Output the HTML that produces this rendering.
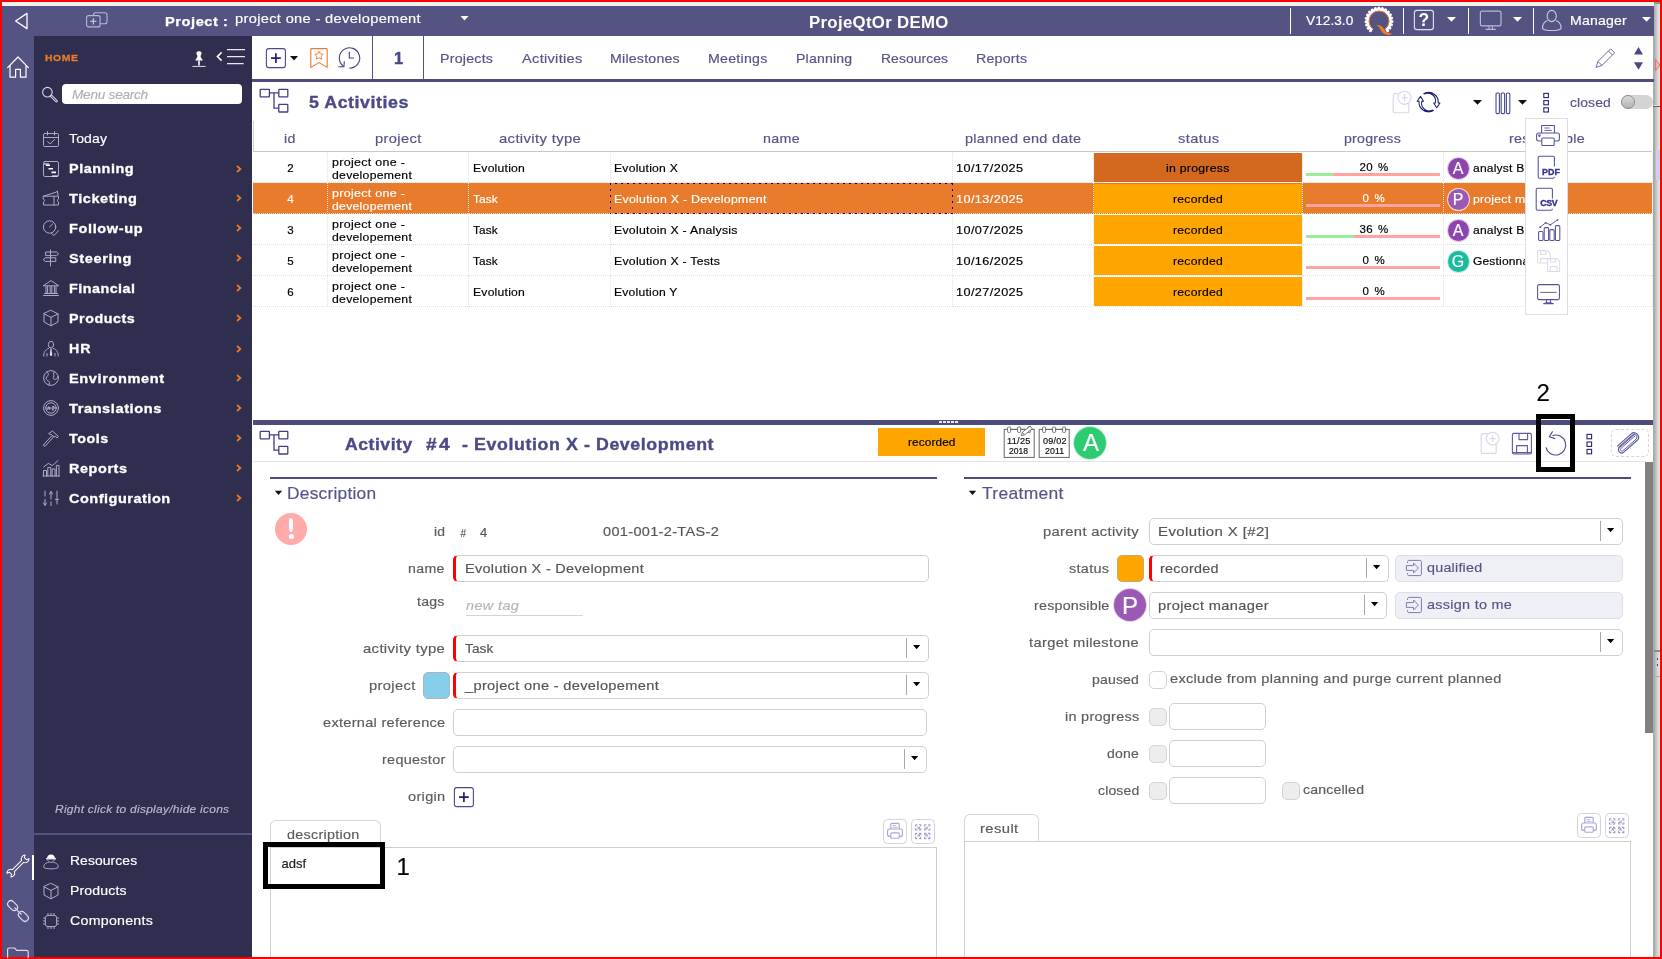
<!DOCTYPE html>
<html><head><meta charset="utf-8"><title>ProjeQtOr DEMO</title>
<style>
html,body{margin:0;padding:0;background:#fff;}
body{width:1662px;height:959px;overflow:hidden;position:relative;font-family:"Liberation Sans",sans-serif;}
#app{position:absolute;left:0;top:0;width:1662px;height:959px;overflow:hidden;background:#ff0000;will-change:transform;}
#app div,#app svg{position:absolute;}
#app svg{overflow:visible;}
</style></head><body><div id="app">
<div style="left:2px;top:2px;width:1658px;height:4px;background:#f1f1f1;"></div>
<div style="left:2px;top:6px;width:1652px;height:30px;background:#545381;"></div>
<div style="left:2px;top:36px;width:32px;height:920.6px;background:#545381;"></div>
<div style="left:34px;top:36px;width:218px;height:920.6px;background:#2f2e4f;"></div>
<div style="left:252px;top:36px;width:1402px;height:920.6px;background:#fff;"></div>
<div style="left:1654px;top:2px;width:6px;height:954.6px;background:linear-gradient(90deg,#a6a6a6 0,#c2c2c2 30%,#d6d6d6 65%,#e8f0f0 100%);"></div>
<div style="left:1653px;top:36px;width:1px;height:920.6px;background:#a9a9a9;"></div>
<div style="left:1654px;top:2px;width:6px;height:2px;background:#8f9494;"></div>
<div style="left:1654px;top:104.6px;width:6px;height:1px;background:#e4e4e4;"></div>
<div style="left:1653.4px;top:105.6px;width:6.6px;height:1.6px;background:#5e5e5e;"></div>
<div style="left:1655.5px;top:150px;width:4.5px;height:30px;background:#d0d0ee;"></div>
<div style="left:1654px;top:650px;width:6px;height:1.6px;background:#8a8a8a;"></div>
<div style="left:1654px;top:676px;width:6px;height:1.4px;background:#ababab;"></div>
<div style="left:1657px;top:658px;width:1.2px;height:2px;background:#446;"></div>
<div style="left:1657px;top:664px;width:1.2px;height:2px;background:#446;"></div>
<svg style="left:1655px;top:58px;" width="6" height="14" viewBox="0 0 6 14" fill="none"><path d="M0.6 1.4 L5 7 L0.6 12.6 Z" fill="#f4b4b4" stroke="#e36a6a" stroke-width=".9"/></svg>
<svg style="left:13px;top:11px;" width="17" height="20" viewBox="0 0 17 20" fill="none"><path d="M14 2.4 L2.6 10 L14 17.6 Z" stroke="#fff" stroke-width="1.3" stroke-linejoin="round"/></svg>
<svg style="left:85px;top:11px;" width="24" height="18" viewBox="0 0 24 18" fill="none"><rect x="8.5" y="1.7" width="13.5" height="11" rx="2" stroke="#b9b8d3" stroke-width="1.1"/><rect x="1.6" y="4.6" width="13.5" height="11.3" rx="2" stroke="#b9b8d3" stroke-width="1.1" fill="#545381"/><path d="M8.3 7.2v6.2M5.2 10.3h6.2" stroke="#d6d6e8" stroke-width="1.1"/></svg>
<div style="left:164.70px;top:14px;font-size:13px;line-height:15px;height:15px;color:#ffffff;white-space:nowrap;letter-spacing:0.484px;transform:scaleX(1.1256);transform-origin:0 0;font-weight:bold;-webkit-text-stroke:.25px #fff;">Project :</div>
<div style="left:235.40px;top:11px;font-size:13.6px;line-height:15px;height:15px;color:#ffffff;white-space:nowrap;letter-spacing:0.311px;transform:scaleX(1.0761);transform-origin:0 0;-webkit-text-stroke:.18px currentColor;">project one - developement</div>
<svg style="left:459px;top:15px;" width="11" height="7" viewBox="0 0 11 7" fill="none"><path d="M1.5 1 L9.5 1 L5.5 5.6 Z" fill="#fff"/></svg>
<div style="left:808.80px;top:14px;font-size:16px;line-height:17px;height:17px;color:#ffffff;white-space:nowrap;letter-spacing:0.308px;transform:scaleX(1.0488);transform-origin:0 0;font-weight:bold;">ProjeQtOr DEMO</div>
<div style="left:1290px;top:8px;width:1.3px;height:26px;background:#fff;"></div>
<div style="left:1403px;top:8px;width:1.3px;height:26px;background:#fff;"></div>
<div style="left:1468px;top:8px;width:1.3px;height:26px;background:#fff;"></div>
<div style="left:1533px;top:8px;width:1.3px;height:26px;background:#fff;"></div>
<div style="left:1305.70px;top:13px;font-size:13.6px;line-height:15px;height:15px;color:#ffffff;white-space:nowrap;letter-spacing:0.028px;transform:scaleX(1.0054);transform-origin:0 0;-webkit-text-stroke:.18px currentColor;">V12.3.0</div>
<svg style="left:1364px;top:6px;" width="30" height="30" viewBox="0 0 30 30" fill="none"><circle cx="6.47" cy="24.81" r="1.5" fill="#fff"/><circle cx="4.17" cy="22.20" r="1.5" fill="#fff"/><circle cx="2.65" cy="19.07" r="1.5" fill="#fff"/><circle cx="2.02" cy="15.64" r="1.5" fill="#fff"/><circle cx="2.31" cy="12.17" r="1.5" fill="#fff"/><circle cx="3.52" cy="8.91" r="1.5" fill="#fff"/><circle cx="5.54" cy="6.08" r="1.5" fill="#fff"/><circle cx="8.25" cy="3.89" r="1.5" fill="#fff"/><circle cx="11.44" cy="2.50" r="1.5" fill="#fff"/><circle cx="14.89" cy="2.00" r="1.5" fill="#fff"/><circle cx="18.34" cy="2.44" r="1.5" fill="#fff"/><circle cx="21.55" cy="3.77" r="1.5" fill="#fff"/><circle cx="24.30" cy="5.92" r="1.5" fill="#fff"/><circle cx="26.38" cy="8.71" r="1.5" fill="#fff"/><circle cx="27.64" cy="11.95" r="1.5" fill="#fff"/><circle cx="27.99" cy="15.42" r="1.5" fill="#fff"/><circle cx="27.42" cy="18.85" r="1.5" fill="#fff"/><circle cx="25.95" cy="22.01" r="1.5" fill="#fff"/><circle cx="23.70" cy="24.66" r="1.5" fill="#fff"/><path d="M8.24 24.30 A11.5 11.5 0 1 1 21.92 24.18" stroke="#fff" stroke-width="2.6" /><path d="M9.18 23.01 A9.9 9.9 0 1 1 20.96 22.91" stroke="#e97b2c" stroke-width="1" /><path d="M12.4 19 C16.8 19 18.8 21 20.4 23.6 C22 26.2 24.4 27.6 28.6 27.4 C24.8 29.8 20.2 29.4 17.8 25.6 C16.2 23 15.4 20.8 12.4 19 Z" fill="#ee7f22"/></svg>
<svg style="left:1413px;top:9px;" width="22" height="22" viewBox="0 0 22 22" fill="none"><rect x="1.4" y="1.4" width="19" height="19.2" rx="2.4" stroke="#dedef0" stroke-width="1.15"/></svg>
<div style="left:1418.60px;top:10px;font-size:17.5px;line-height:20px;height:20px;color:#ffffff;white-space:nowrap;font-weight:bold;">?</div>
<svg style="left:1446px;top:16px;" width="11" height="7" viewBox="0 0 11 7" fill="none"><path d="M1 1 L10 1 L5.5 5.8 Z" fill="#fff"/></svg>
<svg style="left:1479px;top:10px;" width="24" height="21" viewBox="0 0 24 21" fill="none"><rect x="1.4" y="1.2" width="20.6" height="14.6" rx="1.6" stroke="#b9b8d3" stroke-width="1.2"/><path d="M10 16v3M13.4 16v3M6.6 19.4h10.2" stroke="#b9b8d3" stroke-width="1.1"/></svg>
<svg style="left:1512px;top:16px;" width="11" height="7" viewBox="0 0 11 7" fill="none"><path d="M1 1 L10 1 L5.5 5.8 Z" fill="#fff"/></svg>
<svg style="left:1541px;top:9px;" width="22" height="23" viewBox="0 0 22 23" fill="none"><ellipse cx="10.7" cy="7" rx="4.6" ry="5.6" stroke="#c9c8de" stroke-width="1.1"/><path d="M6.6 11.6 C2.6 13 1.4 16 1.6 19.6 C4 22.2 17.6 22.2 20 19.6 C20.2 16 19 13 14.8 11.6" stroke="#c9c8de" stroke-width="1.1"/></svg>
<div style="left:1570.30px;top:13px;font-size:13.6px;line-height:15px;height:15px;color:#ffffff;white-space:nowrap;letter-spacing:0.195px;transform:scaleX(1.0339);transform-origin:0 0;-webkit-text-stroke:.18px currentColor;">Manager</div>
<svg style="left:1641px;top:16px;" width="11" height="7" viewBox="0 0 11 7" fill="none"><path d="M1 1 L10 1 L5.5 5.8 Z" fill="#fff"/></svg>
<svg style="left:6px;top:55px;" width="24" height="24" viewBox="0 0 24 24" fill="none"><path d="M1.6 12.6 L12 2 L22.4 12.6 M4 10.6 V22.2 H9.6 V14.4 H14.4 V22.2 H20 V10.6" stroke="#fff" stroke-width="1.2" stroke-linejoin="round" stroke-linecap="round"/></svg>
<svg style="left:6px;top:854px;" width="24" height="24" viewBox="0 0 24 24" fill="none"><path transform="translate(12 12) rotate(-45) scale(.93)" d="M7 -1.5 A4.2 4.2 0 0 1 13.9 -2.9 L11.2 -1.6 L11.2 1.6 L13.9 2.9 A4.2 4.2 0 0 1 7 1.5 L-7 1.5 A4.2 4.2 0 0 1 -13.9 2.9 L-11.2 1.6 L-11.2 -1.6 L-13.9 -2.9 A4.2 4.2 0 0 1 -7 -1.5 Z" stroke="#fff" stroke-width="1.05" stroke-linejoin="round"/></svg>
<div style="left:31.6px;top:855px;width:2.4px;height:25px;background:#fff;"></div>
<svg style="left:6px;top:899px;" width="24" height="24" viewBox="0 0 24 24" fill="none"><g stroke="#dcdcec" stroke-width="1.2"><rect x="-3.3" y="-5.6" width="6.6" height="11.2" rx="3.3" transform="translate(6.6 6.6) rotate(-45)"/><rect x="-3.3" y="-5.6" width="6.6" height="11.2" rx="3.3" transform="translate(17.4 17.4) rotate(-45)"/><path d="M8.4 8.4 L15.6 15.6"/></g></svg>
<svg style="left:6px;top:946px;" width="24" height="12" viewBox="0 0 24 12" fill="none"><path d="M1.6 12 V3.4 C1.6 2.4 2.2 2 3 2 H8.6 L10.8 4.4 H20.6 C21.6 4.4 22.2 5 22.2 6 V12" stroke="#dcdcec" stroke-width="1.2"/></svg>
<div style="left:44.60px;top:52px;font-size:9.5px;line-height:11px;height:11px;color:#e97b2c;white-space:nowrap;letter-spacing:0.537px;transform:scaleX(1.0926);transform-origin:0 0;font-weight:bold;-webkit-text-stroke:.3px #e97b2c;">HOME</div>
<svg style="left:191px;top:50px;" width="16" height="18" viewBox="0 0 16 18" fill="none"><path d="M5.4 3.2 C5.4 0.6 10.6 0.6 10.6 3.2 C10.6 4.6 9.6 5 9.6 6.4 C9.6 8 11.6 8.4 11.6 10.6 H4.4 C4.4 8.4 6.4 8 6.4 6.4 C6.4 5 5.4 4.6 5.4 3.2 Z" fill="#fff"/><path d="M8 10.6 V15.6" stroke="#fff" stroke-width="1.6"/><path d="M1.4 16.4 H14.6" stroke="#dcdcec" stroke-width="1"/></svg>
<svg style="left:215px;top:47px;" width="32" height="20" viewBox="0 0 32 20" fill="none"><path d="M6.6 5.4 L2.4 9.6 L6.6 13.6" stroke="#fff" stroke-width="1.5"/><path d="M12 2.6 H30 M12 9.6 H30 M12 16.6 H28.6" stroke="#e8e8f2" stroke-width="1.2"/></svg>
<svg style="left:41px;top:86px;" width="18" height="18" viewBox="0 0 18 18" fill="none"><circle cx="6.4" cy="6.2" r="4.8" stroke="#d8d8e6" stroke-width="1.1"/><path d="M10 9.8 L15.6 15.2" stroke="#d8d8e6" stroke-width="2.6" stroke-linecap="round"/><path d="M10.4 10.2 L15.4 15" stroke="#2f2e4f" stroke-width="1" stroke-linecap="round"/></svg>
<div style="left:62px;top:84px;width:180px;height:20px;background:#fff;border-radius:4px;"></div>
<div style="left:72.00px;top:87px;font-size:13.6px;line-height:15px;height:15px;color:#b0b0b0;white-space:nowrap;letter-spacing:-0.241px;font-style:italic;-webkit-text-stroke:.18px currentColor;">Menu search</div>
<div style="left:69.40px;top:131px;font-size:13.6px;line-height:15px;height:15px;color:#ffffff;white-space:nowrap;letter-spacing:0.157px;transform:scaleX(1.0266);transform-origin:0 0;-webkit-text-stroke:.18px currentColor;">Today</div>
<svg style="left:42px;top:130.3px;" width="18" height="18" viewBox="0 0 18 18" fill="none"><rect x="1.5" y="3.5" width="15" height="13" rx="1" stroke="#adacc6" stroke-width="1" stroke-linejoin="round" stroke-linecap="round"/><path d="M1.5 7.5 H16.5 M5.5 1.5 V5 M12.5 1.5 V5 M5.6 11.6 L8.2 14 L12.6 9.4" stroke="#adacc6" stroke-width="1" stroke-linejoin="round" stroke-linecap="round"/></svg>
<div style="left:69.40px;top:161px;font-size:13px;line-height:15px;height:15px;color:#ffffff;white-space:nowrap;letter-spacing:0.502px;transform:scaleX(1.1062);transform-origin:0 0;font-weight:bold;-webkit-text-stroke:.3px #fff;">Planning</div>
<svg style="left:42px;top:159.6px;" width="18" height="18" viewBox="0 0 18 18" fill="none"><rect x="1.5" y="1.5" width="15" height="15" rx="1.6" stroke="#adacc6" stroke-width="1" stroke-linejoin="round" stroke-linecap="round"/><path d="M4 5.2 H8 M6.5 8.8 H11 M9.5 12.4 H14" stroke="#fff" stroke-width="1.6"/><path d="M2 4 H7 M10 16 H16" stroke="#fff" stroke-width="1.2"/></svg>
<svg style="left:235px;top:163.6px;" width="8" height="10" viewBox="0 0 8 10" fill="none"><path d="M2 2 L5.4 5 L2 8" stroke="#e97b2c" stroke-width="1.7"/></svg>
<div style="left:69.40px;top:191px;font-size:13px;line-height:15px;height:15px;color:#ffffff;white-space:nowrap;letter-spacing:0.496px;transform:scaleX(1.1169);transform-origin:0 0;font-weight:bold;-webkit-text-stroke:.3px #fff;">Ticketing</div>
<svg style="left:42px;top:189.4px;" width="18" height="18" viewBox="0 0 18 18" fill="none"><path d="M2 7 L14 3.2 L15.4 2 L16 6.4 M1.5 7.2 H16.5 V10 C15 10.4 15 12.6 16.5 13 V16 H1.5 V13 C3 12.6 3 10.4 1.5 10 Z M12 7.4 V16" stroke="#adacc6" stroke-width="1" stroke-linejoin="round" stroke-linecap="round"/></svg>
<svg style="left:235px;top:193.4px;" width="8" height="10" viewBox="0 0 8 10" fill="none"><path d="M2 2 L5.4 5 L2 8" stroke="#e97b2c" stroke-width="1.7"/></svg>
<div style="left:69.40px;top:221px;font-size:13px;line-height:15px;height:15px;color:#ffffff;white-space:nowrap;letter-spacing:0.546px;transform:scaleX(1.1196);transform-origin:0 0;font-weight:bold;-webkit-text-stroke:.3px #fff;">Follow-up</div>
<svg style="left:42px;top:219.4px;" width="18" height="18" viewBox="0 0 18 18" fill="none"><circle cx="7.6" cy="8" r="6.2" stroke="#adacc6" stroke-width="1" stroke-linejoin="round" stroke-linecap="round"/><path d="M7.6 8 L10.6 5 M9.6 14.4 L12 16.6 L16.6 11.6" stroke="#adacc6" stroke-width="1" stroke-linejoin="round" stroke-linecap="round"/></svg>
<svg style="left:235px;top:223.4px;" width="8" height="10" viewBox="0 0 8 10" fill="none"><path d="M2 2 L5.4 5 L2 8" stroke="#e97b2c" stroke-width="1.7"/></svg>
<div style="left:69.40px;top:251px;font-size:13px;line-height:15px;height:15px;color:#ffffff;white-space:nowrap;letter-spacing:0.535px;transform:scaleX(1.1210);transform-origin:0 0;font-weight:bold;-webkit-text-stroke:.3px #fff;">Steering</div>
<svg style="left:42px;top:249.4px;" width="18" height="18" viewBox="0 0 18 18" fill="none"><path d="M8.5 1 V17 M4 3 H14.6 L16.6 4.8 L14.6 6.6 H4 Z M13.4 8.8 H3.2 L1.2 10.6 L3.2 12.4 H13.4 Z" stroke="#adacc6" stroke-width="1" stroke-linejoin="round" stroke-linecap="round"/></svg>
<svg style="left:235px;top:253.4px;" width="8" height="10" viewBox="0 0 8 10" fill="none"><path d="M2 2 L5.4 5 L2 8" stroke="#e97b2c" stroke-width="1.7"/></svg>
<div style="left:69.40px;top:281px;font-size:13px;line-height:15px;height:15px;color:#ffffff;white-space:nowrap;letter-spacing:0.438px;transform:scaleX(1.1028);transform-origin:0 0;font-weight:bold;-webkit-text-stroke:.3px #fff;">Financial</div>
<svg style="left:42px;top:279.2px;" width="18" height="18" viewBox="0 0 18 18" fill="none"><path d="M1.5 6.6 L9 1.6 L16.5 6.6 Z M1.5 16.5 H16.5 M2.5 14.5 H15.5 M4 7.6 V14 M5.6 7.6 V14 M8.2 7.6 V14 M9.8 7.6 V14 M12.4 7.6 V14 M14 7.6 V14" stroke="#adacc6" stroke-width="1" stroke-linejoin="round" stroke-linecap="round"/></svg>
<svg style="left:235px;top:283.2px;" width="8" height="10" viewBox="0 0 8 10" fill="none"><path d="M2 2 L5.4 5 L2 8" stroke="#e97b2c" stroke-width="1.7"/></svg>
<div style="left:69.40px;top:311px;font-size:13px;line-height:15px;height:15px;color:#ffffff;white-space:nowrap;letter-spacing:0.482px;transform:scaleX(1.0986);transform-origin:0 0;font-weight:bold;-webkit-text-stroke:.3px #fff;">Products</div>
<svg style="left:42px;top:309.2px;" width="18" height="18" viewBox="0 0 18 18" fill="none"><path d="M9 1.4 L16 4.8 V13 L9 16.8 L2 13 V4.8 Z M2 4.8 L9 8.4 L16 4.8 M9 8.4 V16.8" stroke="#adacc6" stroke-width="1" stroke-linejoin="round" stroke-linecap="round"/></svg>
<svg style="left:235px;top:313.2px;" width="8" height="10" viewBox="0 0 8 10" fill="none"><path d="M2 2 L5.4 5 L2 8" stroke="#e97b2c" stroke-width="1.7"/></svg>
<div style="left:69.40px;top:341px;font-size:13px;line-height:15px;height:15px;color:#ffffff;white-space:nowrap;letter-spacing:1.036px;transform:scaleX(1.0902);transform-origin:0 0;font-weight:bold;-webkit-text-stroke:.3px #fff;">HR</div>
<svg style="left:42px;top:339.6px;" width="18" height="18" viewBox="0 0 18 18" fill="none"><ellipse cx="9" cy="4.6" rx="2.6" ry="3.4" stroke="#adacc6" stroke-width="1" stroke-linejoin="round" stroke-linecap="round"/><path d="M6.6 8.4 C3 9.6 1.6 12.6 1.8 16 M11.4 8.4 C15 9.6 16.4 12.6 16.2 16 M5 13.4 V16 M13 13.4 V16" stroke="#adacc6" stroke-width="1" stroke-linejoin="round" stroke-linecap="round"/><path d="M9 8.6 L8.2 14.6 L9 16 L9.8 14.6 Z" fill="#fff" stroke="#fff" stroke-width=".5"/></svg>
<svg style="left:235px;top:343.6px;" width="8" height="10" viewBox="0 0 8 10" fill="none"><path d="M2 2 L5.4 5 L2 8" stroke="#e97b2c" stroke-width="1.7"/></svg>
<div style="left:69.40px;top:371px;font-size:13px;line-height:15px;height:15px;color:#ffffff;white-space:nowrap;letter-spacing:0.557px;transform:scaleX(1.1174);transform-origin:0 0;font-weight:bold;-webkit-text-stroke:.3px #fff;">Environment</div>
<svg style="left:42px;top:369.3px;" width="18" height="18" viewBox="0 0 18 18" fill="none"><circle cx="9" cy="9" r="7.4" stroke="#adacc6" stroke-width="1" stroke-linejoin="round" stroke-linecap="round"/><path d="M5 3 C7.6 4.4 6 6.6 4.6 8 C3.4 9.4 4.6 11.6 6.4 12 C8 12.6 7.4 14.6 7 16 M12.4 2.6 C10.4 4.6 12.6 6 11.6 8.4 C10.6 10.6 13 11 14.6 9.6 C15.6 8.8 16 8 16.2 7.4" stroke="#adacc6" stroke-width="1" stroke-linejoin="round" stroke-linecap="round"/></svg>
<svg style="left:235px;top:373.3px;" width="8" height="10" viewBox="0 0 8 10" fill="none"><path d="M2 2 L5.4 5 L2 8" stroke="#e97b2c" stroke-width="1.7"/></svg>
<div style="left:69.40px;top:401px;font-size:13px;line-height:15px;height:15px;color:#ffffff;white-space:nowrap;letter-spacing:0.509px;transform:scaleX(1.1232);transform-origin:0 0;font-weight:bold;-webkit-text-stroke:.3px #fff;">Translations</div>
<svg style="left:42px;top:399.4px;" width="18" height="18" viewBox="0 0 18 18" fill="none"><circle cx="9" cy="9" r="7.4" stroke="#adacc6" stroke-width="1" stroke-linejoin="round" stroke-linecap="round"/><circle cx="9" cy="9" r="5.2" stroke="#adacc6" stroke-width="1" stroke-linejoin="round" stroke-linecap="round"/><path d="M3.8 9 H14.2" stroke="#adacc6" stroke-width="1" stroke-linejoin="round" stroke-linecap="round"/><path d="M5.6 11 L6.8 7.6 L8 11 M10 7.6 H12.2 L10 11 H12.2" stroke="#c4c3d8" stroke-width=".8"/></svg>
<svg style="left:235px;top:403.4px;" width="8" height="10" viewBox="0 0 8 10" fill="none"><path d="M2 2 L5.4 5 L2 8" stroke="#e97b2c" stroke-width="1.7"/></svg>
<div style="left:69.40px;top:431px;font-size:13px;line-height:15px;height:15px;color:#ffffff;white-space:nowrap;letter-spacing:0.493px;transform:scaleX(1.0962);transform-origin:0 0;font-weight:bold;-webkit-text-stroke:.3px #fff;">Tools</div>
<svg style="left:42px;top:429.3px;" width="18" height="18" viewBox="0 0 18 18" fill="none"><path d="M1.6 16.4 L3 17.4 L11.8 7.6 L10.4 6.6 Z M7 4.4 L10.4 2 L16.4 7.4 L15 9 L13.4 7.2 L12 8 L9.6 5.8 Z" stroke="#adacc6" stroke-width="1" stroke-linejoin="round" stroke-linecap="round"/></svg>
<svg style="left:235px;top:433.3px;" width="8" height="10" viewBox="0 0 8 10" fill="none"><path d="M2 2 L5.4 5 L2 8" stroke="#e97b2c" stroke-width="1.7"/></svg>
<div style="left:69.40px;top:461px;font-size:13px;line-height:15px;height:15px;color:#ffffff;white-space:nowrap;letter-spacing:0.534px;transform:scaleX(1.1085);transform-origin:0 0;font-weight:bold;-webkit-text-stroke:.3px #fff;">Reports</div>
<svg style="left:42px;top:459.4px;" width="18" height="18" viewBox="0 0 18 18" fill="none"><path d="M1.5 17 V11.5 H4.5 V17 M5.8 17 V8.5 H8.8 V17 M10.1 17 V10 H13.1 V17 M14.4 17 V6.5 H17 V17 M1 17 H17.4 M1.6 8 L6.4 4.4 L10.4 6.6 L16 1.6" stroke="#adacc6" stroke-width="1" stroke-linejoin="round" stroke-linecap="round"/></svg>
<svg style="left:235px;top:463.4px;" width="8" height="10" viewBox="0 0 8 10" fill="none"><path d="M2 2 L5.4 5 L2 8" stroke="#e97b2c" stroke-width="1.7"/></svg>
<div style="left:69.40px;top:491px;font-size:13px;line-height:15px;height:15px;color:#ffffff;white-space:nowrap;letter-spacing:0.477px;transform:scaleX(1.1120);transform-origin:0 0;font-weight:bold;-webkit-text-stroke:.3px #fff;">Configuration</div>
<svg style="left:42px;top:489.4px;" width="18" height="18" viewBox="0 0 18 18" fill="none"><path d="M3 2 V15 M9 4 V16.6 M15 2 V15 M1.6 14 L3 16.6 L4.4 14 M7.6 5 L9 2.2 L10.4 5 M13.4 10.4 H16.6" stroke="#adacc6" stroke-width="1" stroke-linejoin="round" stroke-linecap="round"/><path d="M1.8 8.8 H4.2 M7.8 11.4 H10.2" stroke="#2f2e4f" stroke-width="2.4"/></svg>
<svg style="left:235px;top:493.4px;" width="8" height="10" viewBox="0 0 8 10" fill="none"><path d="M2 2 L5.4 5 L2 8" stroke="#e97b2c" stroke-width="1.7"/></svg>
<div style="left:55.00px;top:803px;font-size:11px;line-height:12px;height:12px;color:#b9b8cc;white-space:nowrap;letter-spacing:0.251px;transform:scaleX(1.0858);transform-origin:0 0;font-style:italic;-webkit-text-stroke:.18px currentColor;">Right click to display/hide icons</div>
<div style="left:34px;top:833px;width:218px;height:2px;background:#545381;"></div>
<div style="left:69.60px;top:853px;font-size:13.6px;line-height:15px;height:15px;color:#ffffff;white-space:nowrap;letter-spacing:0.103px;transform:scaleX(1.0194);transform-origin:0 0;-webkit-text-stroke:.18px currentColor;">Resources</div>
<div style="left:69.60px;top:883px;font-size:13.6px;line-height:15px;height:15px;color:#ffffff;white-space:nowrap;letter-spacing:0.162px;transform:scaleX(1.0328);transform-origin:0 0;-webkit-text-stroke:.18px currentColor;">Products</div>
<div style="left:69.60px;top:913px;font-size:13.6px;line-height:15px;height:15px;color:#ffffff;white-space:nowrap;letter-spacing:0.242px;transform:scaleX(1.0443);transform-origin:0 0;-webkit-text-stroke:.18px currentColor;">Components</div>
<svg style="left:42px;top:852px;" width="18" height="18" viewBox="0 0 18 18" fill="none"><path d="M5 6.6 C5 1.2 13 1.2 13 6.6 Z" fill="#fff"/><path d="M4 6.8 H14" stroke="#fff" stroke-width="1.2"/><path d="M5.6 7.4 C5.6 11.4 12.4 11.4 12.4 7.4 M6.4 10.4 C2.8 11 1.6 13 1.8 15.4 C4 17.4 14 17.4 16.2 15.4 C16.4 13 15.2 11 11.6 10.4" stroke="#adacc6" stroke-width="1" stroke-linejoin="round" stroke-linecap="round"/></svg>
<svg style="left:42px;top:882px;" width="18" height="18" viewBox="0 0 18 18" fill="none"><path d="M9 1.4 L16 4.8 V13 L9 16.8 L2 13 V4.8 Z M2 4.8 L9 8.4 L16 4.8 M9 8.4 V16.8" stroke="#adacc6" stroke-width="1" stroke-linejoin="round" stroke-linecap="round"/></svg>
<svg style="left:42px;top:912px;" width="18" height="18" viewBox="0 0 18 18" fill="none"><rect x="3.4" y="3.4" width="11.2" height="11.2" rx="2.4" stroke="#adacc6" stroke-width="1" stroke-linejoin="round" stroke-linecap="round"/><path d="M6 1.4 V3 M9 1.4 V3 M12 1.4 V3 M6 15 V16.6 M9 15 V16.6 M12 15 V16.6 M1.4 6 H3 M1.4 9 H3 M1.4 12 H3 M15 6 H16.6 M15 9 H16.6 M15 12 H16.6" stroke="#adacc6" stroke-width="1" stroke-linejoin="round" stroke-linecap="round"/></svg>
<div style="left:252px;top:79px;width:1402px;height:3px;background:#4d4c7e;"></div>
<div style="left:372px;top:36px;width:1.2px;height:43px;background:#545381;"></div>
<div style="left:423px;top:36px;width:1.2px;height:43px;background:#545381;"></div>
<svg style="left:265px;top:47px;" width="22" height="22" viewBox="0 0 22 22" fill="none"><rect x="1.4" y="1.6" width="19" height="19" rx="2.4" stroke="#4a4990" stroke-width="1.1"/><path d="M10.9 6.2 V16 M6 11.1 H15.8" stroke="#1f1e72" stroke-width="1.7"/></svg>
<svg style="left:289px;top:55px;" width="10" height="7" viewBox="0 0 10 7" fill="none"><path d="M1 1 L9 1 L5 5.6 Z" fill="#111"/></svg>
<svg style="left:309px;top:47px;" width="20" height="22" viewBox="0 0 20 22" fill="none"><path d="M2.6 1.6 H17.4 C17.9 1.6 18.2 1.9 18.2 2.4 V20.4 L10 15.6 L1.8 20.4 V2.4 C1.8 1.9 2.1 1.6 2.6 1.6 Z" stroke="#e97b2c" stroke-width="1.1" stroke-linejoin="round"/><path d="M10 4.2 L11.3 6.9 L14.2 7.3 L12.1 9.3 L12.6 12.2 L10 10.8 L7.4 12.2 L7.9 9.3 L5.8 7.3 L8.7 6.9 Z" stroke="#e97b2c" stroke-width=".9" stroke-linejoin="round"/></svg>
<svg style="left:337px;top:46px;" width="25" height="24" viewBox="0 0 25 24" fill="none"><g stroke="#3f3e8c" stroke-width="1.1"><path d="M12.3 22.2 A10.2 10.2 0 1 0 6.3 20.1"/><path d="M7.3 15.3 L6.9 20.7 L1.5 20.7" stroke-linejoin="miter"/><path d="M12.3 5.7 V12 H16.9"/></g></svg>
<div style="left:393.91px;top:49px;font-size:16.5px;line-height:18px;height:18px;color:#4b4a86;white-space:nowrap;font-weight:bold;-webkit-text-stroke:.4px #4b4a86;">1</div>
<div style="left:440.00px;top:51px;font-size:13.6px;line-height:15px;height:15px;color:#565588;white-space:nowrap;letter-spacing:0.211px;transform:scaleX(1.0473);transform-origin:0 0;-webkit-text-stroke:.18px currentColor;">Projects</div>
<div style="left:521.60px;top:51px;font-size:13.6px;line-height:15px;height:15px;color:#565588;white-space:nowrap;letter-spacing:0.275px;transform:scaleX(1.0743);transform-origin:0 0;-webkit-text-stroke:.18px currentColor;">Activities</div>
<div style="left:609.90px;top:51px;font-size:13.6px;line-height:15px;height:15px;color:#565588;white-space:nowrap;letter-spacing:0.200px;transform:scaleX(1.0434);transform-origin:0 0;-webkit-text-stroke:.18px currentColor;">Milestones</div>
<div style="left:708.20px;top:51px;font-size:13.6px;line-height:15px;height:15px;color:#565588;white-space:nowrap;letter-spacing:0.225px;transform:scaleX(1.0448);transform-origin:0 0;-webkit-text-stroke:.18px currentColor;">Meetings</div>
<div style="left:796.20px;top:51px;font-size:13.6px;line-height:15px;height:15px;color:#565588;white-space:nowrap;letter-spacing:0.175px;transform:scaleX(1.0359);transform-origin:0 0;-webkit-text-stroke:.18px currentColor;">Planning</div>
<div style="left:881.20px;top:51px;font-size:13.6px;line-height:15px;height:15px;color:#565588;white-space:nowrap;letter-spacing:0.098px;transform:scaleX(1.0184);transform-origin:0 0;-webkit-text-stroke:.18px currentColor;">Resources</div>
<div style="left:976.30px;top:51px;font-size:13.6px;line-height:15px;height:15px;color:#565588;white-space:nowrap;letter-spacing:0.216px;transform:scaleX(1.0426);transform-origin:0 0;-webkit-text-stroke:.18px currentColor;">Reports</div>
<svg style="left:1593px;top:46px;" width="25" height="24" viewBox="0 0 25 24" fill="none"><path d="M3 21.4 L5 15.4 L17.6 2.8 L21.6 6.8 L9 19.4 Z M5 15.4 L9 19.4 M15.4 5 L19.4 9" stroke="#6e6da2" stroke-width="1" stroke-linejoin="round"/></svg>
<svg style="left:1633px;top:46px;" width="11" height="25" viewBox="0 0 11 25" fill="none"><path d="M1 8.6 L5.5 1 L10 8.6 Z M1 16.2 L5.5 23.8 L10 16.2 Z" fill="#4a4988"/></svg>
<svg style="left:259px;top:87.8px;" width="31" height="26" viewBox="0 0 31 26" fill="none"><g stroke="#3f3e8c" stroke-width="1.3"><rect x="1.2" y="1.3" width="9.2" height="7.6" rx=".6"/><rect x="19.8" y="1.3" width="9" height="7.6" rx=".6"/><rect x="19.8" y="16.4" width="9" height="7.6" rx=".6"/><path d="M10.4 4.9 H19.8 M15 4.9 V20.1 H19.8"/></g></svg>
<div style="left:309.00px;top:94px;font-size:16px;line-height:17px;height:17px;color:#4b4a86;white-space:nowrap;letter-spacing:0.505px;transform:scaleX(1.1103);transform-origin:0 0;font-weight:bold;-webkit-text-stroke:.35px #4b4a86;">5 Activities</div>
<svg style="left:1391px;top:90px;" width="22" height="24" viewBox="0 0 22 24" fill="none"><path d="M7.4 3.6 H3.6 C2.8 3.6 2.2 4.2 2.2 5 V21.4 C2.2 22.2 2.8 22.8 3.6 22.8 H16.4 C17.2 22.8 17.8 22.2 17.8 21.4 V13.6" stroke="#d6d5ea" stroke-width="1.1"/><circle cx="13.5" cy="7.8" r="6.6" stroke="#d6d5ea" stroke-width="1.1" fill="#fff"/><path d="M13.5 4.6 V11 M10.3 7.8 H16.7" stroke="#d6d5ea" stroke-width="1.1"/></svg>
<svg style="left:1416px;top:90px;" width="26" height="24" viewBox="0 0 26 24" fill="none"><g stroke="#1f1e72" stroke-width="1.05" stroke-linejoin="round"><path id="ra" d="M7.8 3.8 A9.6 9.6 0 0 1 22.2 13 L24 13 L20.7 17.8 L17.7 13 L19.4 13 A8.2 8.2 0 0 0 7.8 3.8 Z"/><path d="M7.8 3.8 A9.6 9.6 0 0 1 22.2 13 L24 13 L20.7 17.8 L17.7 13 L19.4 13 A8.2 8.2 0 0 0 7.8 3.8 Z" transform="rotate(180 12.6 12.1)"/></g><path d="M8.2 3.9 A9.3 9.3 0 0 1 17 3.9" stroke="#1f1e72" stroke-width="1.6"/><path d="M17 20.3 A9.3 9.3 0 0 1 8.2 20.3" stroke="#1f1e72" stroke-width="1.6"/></svg>
<svg style="left:1472px;top:98.5px;" width="11" height="7" viewBox="0 0 11 7" fill="none"><path d="M1 1 L10 1 L5.5 5.8 Z" fill="#111"/></svg>
<svg style="left:1495px;top:91.5px;" width="16" height="23" viewBox="0 0 16 23" fill="none"><g stroke="#4a4990" stroke-width="1.1"><rect x="1" y="1" width="3.4" height="20.6" rx="1"/><rect x="6.2" y="1" width="3.4" height="20.6" rx="1"/><rect x="11.4" y="1" width="3.4" height="20.6" rx="1"/></g></svg>
<svg style="left:1517px;top:98.5px;" width="11" height="7" viewBox="0 0 11 7" fill="none"><path d="M1 1 L10 1 L5.5 5.8 Z" fill="#111"/></svg>
<svg style="left:1542px;top:92px;" width="9" height="22" viewBox="0 0 9 22" fill="none"><g stroke="#26256f" stroke-width="1.1"><rect x="1.8" y="1.4" width="4.6" height="4.2"/><rect x="1.8" y="8.6" width="4.6" height="4.2"/><rect x="1.8" y="15.8" width="4.6" height="4.2"/></g></svg>
<div style="left:1570.30px;top:95px;font-size:13.6px;line-height:15px;height:15px;color:#565588;white-space:nowrap;letter-spacing:0.109px;transform:scaleX(1.0212);transform-origin:0 0;-webkit-text-stroke:.18px currentColor;">closed</div>
<div style="left:1621px;top:95px;width:31.5px;height:14px;background:#d4d4d4;border-radius:7px;"></div>
<div style="left:1621px;top:95px;width:14px;height:14px;background:linear-gradient(180deg,#dadada,#b4b4b4);border-radius:50%;border:1px solid #8e8e8e;box-sizing:border-box;"></div>
<div style="left:253px;top:121px;width:1px;height:31px;background:#d2d2d2;"></div>
<div style="left:253px;top:151px;width:1399px;height:1.4px;background:#c9c9c9;"></div>
<div style="left:284.40px;top:131px;font-size:13.6px;line-height:15px;height:15px;color:#565588;white-space:nowrap;letter-spacing:0.275px;transform:scaleX(1.0406);transform-origin:0 0;-webkit-text-stroke:.18px currentColor;">id</div>
<div style="left:375.10px;top:131px;font-size:13.6px;line-height:15px;height:15px;color:#565588;white-space:nowrap;letter-spacing:0.338px;transform:scaleX(1.0806);transform-origin:0 0;-webkit-text-stroke:.18px currentColor;">project</div>
<div style="left:498.60px;top:131px;font-size:13.6px;line-height:15px;height:15px;color:#565588;white-space:nowrap;letter-spacing:0.329px;transform:scaleX(1.0908);transform-origin:0 0;-webkit-text-stroke:.18px currentColor;">activity type</div>
<div style="left:763.00px;top:131px;font-size:13.6px;line-height:15px;height:15px;color:#565588;white-space:nowrap;letter-spacing:0.354px;transform:scaleX(1.0491);transform-origin:0 0;-webkit-text-stroke:.18px currentColor;">name</div>
<div style="left:965.30px;top:131px;font-size:13.6px;line-height:15px;height:15px;color:#565588;white-space:nowrap;letter-spacing:0.273px;transform:scaleX(1.0622);transform-origin:0 0;-webkit-text-stroke:.18px currentColor;">planned end date</div>
<div style="left:1177.50px;top:131px;font-size:13.6px;line-height:15px;height:15px;color:#565588;white-space:nowrap;letter-spacing:0.350px;transform:scaleX(1.0780);transform-origin:0 0;-webkit-text-stroke:.18px currentColor;">status</div>
<div style="left:1344.40px;top:131px;font-size:13.6px;line-height:15px;height:15px;color:#565588;white-space:nowrap;letter-spacing:0.213px;transform:scaleX(1.0441);transform-origin:0 0;-webkit-text-stroke:.18px currentColor;">progress</div>
<div style="left:1509.30px;top:131px;font-size:13.6px;line-height:15px;height:15px;color:#565588;white-space:nowrap;letter-spacing:0.234px;transform:scaleX(1.0531);transform-origin:0 0;-webkit-text-stroke:.18px currentColor;">responsible</div>
<div style="left:253px;top:182px;width:1399px;height:0;border-top:1px dotted #e2dfd4"></div>
<div style="left:327px;top:152px;width:0;height:31px;border-left:1px dotted #e6e3d9"></div>
<div style="left:468px;top:152px;width:0;height:31px;border-left:1px dotted #e6e3d9"></div>
<div style="left:609.8px;top:152px;width:0;height:31px;border-left:1px dotted #e6e3d9"></div>
<div style="left:952.3px;top:152px;width:0;height:31px;border-left:1px dotted #e6e3d9"></div>
<div style="left:1093px;top:152px;width:0;height:31px;border-left:1px dotted #e6e3d9"></div>
<div style="left:1301.5px;top:152px;width:0;height:31px;border-left:1px dotted #e6e3d9"></div>
<div style="left:1442.8px;top:152px;width:0;height:31px;border-left:1px dotted #e6e3d9"></div>
<div style="left:1651.5px;top:152px;width:0;height:31px;border-left:1px dotted #e6e3d9"></div>
<div style="left:287.30px;top:162px;font-size:11.5px;line-height:12px;height:12px;color:#000;white-space:nowrap;-webkit-text-stroke:.18px currentColor;">2</div>
<div style="left:331.50px;top:156px;font-size:11.5px;line-height:12px;height:12px;color:#000;white-space:nowrap;letter-spacing:0.276px;transform:scaleX(1.0843);transform-origin:0 0;-webkit-text-stroke:.18px currentColor;">project one -</div>
<div style="left:331.50px;top:169px;font-size:11.5px;line-height:12px;height:12px;color:#000;white-space:nowrap;letter-spacing:0.259px;transform:scaleX(1.0628);transform-origin:0 0;-webkit-text-stroke:.18px currentColor;">developement</div>
<div style="left:472.60px;top:162px;font-size:11.5px;line-height:12px;height:12px;color:#000;white-space:nowrap;letter-spacing:0.213px;transform:scaleX(1.0570);transform-origin:0 0;-webkit-text-stroke:.18px currentColor;">Evolution</div>
<div style="left:613.70px;top:162px;font-size:11.5px;line-height:12px;height:12px;color:#000;white-space:nowrap;letter-spacing:0.213px;transform:scaleX(1.0580);transform-origin:0 0;-webkit-text-stroke:.18px currentColor;">Evolution X</div>
<div style="left:956.40px;top:162px;font-size:11.5px;line-height:12px;height:12px;color:#000;white-space:nowrap;letter-spacing:0.386px;transform:scaleX(1.0996);transform-origin:0 0;-webkit-text-stroke:.18px currentColor;">10/17/2025</div>
<div style="left:1094px;top:153px;width:208px;height:29px;background:#d2691e;"></div>
<div style="left:1166.20px;top:162px;font-size:11.5px;line-height:12px;height:12px;color:#000;white-space:nowrap;letter-spacing:0.240px;transform:scaleX(1.0677);transform-origin:0 0;-webkit-text-stroke:.18px currentColor;">in progress</div>
<div style="left:1359.39px;top:161px;font-size:11.5px;line-height:12px;height:12px;color:#000;white-space:nowrap;-webkit-text-stroke:.18px currentColor;word-spacing:1.5px;letter-spacing:.4px;">20 %</div>
<div style="left:1306px;top:173.2px;width:134px;height:3px;background:#ffa3a3;"></div>
<div style="left:1306px;top:173.2px;width:26.8px;height:3px;background:#9aee9a;"></div>
<div style="left:1447.5px;top:157.5px;width:21px;height:21px;background:#8e44ad;border-radius:50%;box-shadow:0 0 0 1px #8e44ad44;"></div>
<div style="left:1452.66px;top:160px;font-size:16px;line-height:17px;height:17px;color:#fff;white-space:nowrap;-webkit-text-stroke:.18px currentColor;">A</div>
<div style="left:1473.00px;top:162px;font-size:11.5px;line-height:12px;height:12px;color:#000;white-space:nowrap;letter-spacing:0.186px;transform:scaleX(1.0495);transform-origin:0 0;-webkit-text-stroke:.18px currentColor;">analyst B</div>
<div style="left:253px;top:183px;width:1399px;height:31px;background:#e97b2c;"></div>
<div style="left:253px;top:213px;width:1399px;height:0;border-top:1px dotted #e2dfd4"></div>
<div style="left:327px;top:183px;width:0;height:31px;border-left:1px dotted #e6e3d9"></div>
<div style="left:468px;top:183px;width:0;height:31px;border-left:1px dotted #e6e3d9"></div>
<div style="left:609.8px;top:183px;width:0;height:31px;border-left:1px dotted #e6e3d9"></div>
<div style="left:952.3px;top:183px;width:0;height:31px;border-left:1px dotted #e6e3d9"></div>
<div style="left:1093px;top:183px;width:0;height:31px;border-left:1px dotted #e6e3d9"></div>
<div style="left:1301.5px;top:183px;width:0;height:31px;border-left:1px dotted #e6e3d9"></div>
<div style="left:1442.8px;top:183px;width:0;height:31px;border-left:1px dotted #e6e3d9"></div>
<div style="left:1651.5px;top:183px;width:0;height:31px;border-left:1px dotted #e6e3d9"></div>
<div style="left:287.30px;top:193px;font-size:11.5px;line-height:12px;height:12px;color:#fff;white-space:nowrap;-webkit-text-stroke:.18px currentColor;">4</div>
<div style="left:331.50px;top:187px;font-size:11.5px;line-height:12px;height:12px;color:#fff;white-space:nowrap;letter-spacing:0.276px;transform:scaleX(1.0843);transform-origin:0 0;-webkit-text-stroke:.18px currentColor;">project one -</div>
<div style="left:331.50px;top:200px;font-size:11.5px;line-height:12px;height:12px;color:#fff;white-space:nowrap;letter-spacing:0.259px;transform:scaleX(1.0628);transform-origin:0 0;-webkit-text-stroke:.18px currentColor;">developement</div>
<div style="left:472.60px;top:193px;font-size:11.5px;line-height:12px;height:12px;color:#fff;white-space:nowrap;letter-spacing:0.124px;transform:scaleX(1.0242);transform-origin:0 0;-webkit-text-stroke:.18px currentColor;">Task</div>
<div style="left:613.70px;top:193px;font-size:11.5px;line-height:12px;height:12px;color:#fff;white-space:nowrap;letter-spacing:0.251px;transform:scaleX(1.0712);transform-origin:0 0;-webkit-text-stroke:.18px currentColor;">Evolution X - Development</div>
<div style="left:956.40px;top:193px;font-size:11.5px;line-height:12px;height:12px;color:#fff;white-space:nowrap;letter-spacing:0.386px;transform:scaleX(1.0996);transform-origin:0 0;-webkit-text-stroke:.18px currentColor;">10/13/2025</div>
<div style="left:1094px;top:184px;width:208px;height:29px;background:#ffa500;"></div>
<div style="left:1173.00px;top:193px;font-size:11.5px;line-height:12px;height:12px;color:#000;white-space:nowrap;letter-spacing:0.238px;transform:scaleX(1.0584);transform-origin:0 0;-webkit-text-stroke:.18px currentColor;">recorded</div>
<div style="left:1362.59px;top:192px;font-size:11.5px;line-height:12px;height:12px;color:#fff;white-space:nowrap;-webkit-text-stroke:.18px currentColor;word-spacing:1.5px;letter-spacing:.4px;">0 %</div>
<div style="left:1306px;top:204.2px;width:134px;height:3px;background:#ffa3a3;"></div>
<div style="left:1447.5px;top:188.5px;width:21px;height:21px;background:#9b59b6;border-radius:50%;box-shadow:0 0 0 1px rgba(255,255,255,.75);"></div>
<div style="left:1452.66px;top:191px;font-size:16px;line-height:17px;height:17px;color:#fff;white-space:nowrap;-webkit-text-stroke:.18px currentColor;">P</div>
<div style="left:1473.00px;top:193px;font-size:11.5px;line-height:12px;height:12px;color:#fff;white-space:nowrap;letter-spacing:0.226px;transform:scaleX(1.0607);transform-origin:0 0;-webkit-text-stroke:.18px currentColor;">project manager</div>
<div style="left:253px;top:244px;width:1399px;height:0;border-top:1px dotted #e2dfd4"></div>
<div style="left:327px;top:214px;width:0;height:31px;border-left:1px dotted #e6e3d9"></div>
<div style="left:468px;top:214px;width:0;height:31px;border-left:1px dotted #e6e3d9"></div>
<div style="left:609.8px;top:214px;width:0;height:31px;border-left:1px dotted #e6e3d9"></div>
<div style="left:952.3px;top:214px;width:0;height:31px;border-left:1px dotted #e6e3d9"></div>
<div style="left:1093px;top:214px;width:0;height:31px;border-left:1px dotted #e6e3d9"></div>
<div style="left:1301.5px;top:214px;width:0;height:31px;border-left:1px dotted #e6e3d9"></div>
<div style="left:1442.8px;top:214px;width:0;height:31px;border-left:1px dotted #e6e3d9"></div>
<div style="left:1651.5px;top:214px;width:0;height:31px;border-left:1px dotted #e6e3d9"></div>
<div style="left:287.30px;top:224px;font-size:11.5px;line-height:12px;height:12px;color:#000;white-space:nowrap;-webkit-text-stroke:.18px currentColor;">3</div>
<div style="left:331.50px;top:218px;font-size:11.5px;line-height:12px;height:12px;color:#000;white-space:nowrap;letter-spacing:0.276px;transform:scaleX(1.0843);transform-origin:0 0;-webkit-text-stroke:.18px currentColor;">project one -</div>
<div style="left:331.50px;top:231px;font-size:11.5px;line-height:12px;height:12px;color:#000;white-space:nowrap;letter-spacing:0.259px;transform:scaleX(1.0628);transform-origin:0 0;-webkit-text-stroke:.18px currentColor;">developement</div>
<div style="left:472.60px;top:224px;font-size:11.5px;line-height:12px;height:12px;color:#000;white-space:nowrap;letter-spacing:0.124px;transform:scaleX(1.0242);transform-origin:0 0;-webkit-text-stroke:.18px currentColor;">Task</div>
<div style="left:613.70px;top:224px;font-size:11.5px;line-height:12px;height:12px;color:#000;white-space:nowrap;letter-spacing:0.230px;transform:scaleX(1.0701);transform-origin:0 0;-webkit-text-stroke:.18px currentColor;">Evolutoin X - Analysis</div>
<div style="left:956.40px;top:224px;font-size:11.5px;line-height:12px;height:12px;color:#000;white-space:nowrap;letter-spacing:0.386px;transform:scaleX(1.0996);transform-origin:0 0;-webkit-text-stroke:.18px currentColor;">10/07/2025</div>
<div style="left:1094px;top:215px;width:208px;height:29px;background:#ffa500;"></div>
<div style="left:1173.00px;top:224px;font-size:11.5px;line-height:12px;height:12px;color:#000;white-space:nowrap;letter-spacing:0.238px;transform:scaleX(1.0584);transform-origin:0 0;-webkit-text-stroke:.18px currentColor;">recorded</div>
<div style="left:1359.39px;top:223px;font-size:11.5px;line-height:12px;height:12px;color:#000;white-space:nowrap;-webkit-text-stroke:.18px currentColor;word-spacing:1.5px;letter-spacing:.4px;">36 %</div>
<div style="left:1306px;top:235.2px;width:134px;height:3px;background:#ffa3a3;"></div>
<div style="left:1306px;top:235.2px;width:48.24px;height:3px;background:#9aee9a;"></div>
<div style="left:1447.5px;top:219.5px;width:21px;height:21px;background:#8e44ad;border-radius:50%;box-shadow:0 0 0 1px #8e44ad44;"></div>
<div style="left:1452.66px;top:222px;font-size:16px;line-height:17px;height:17px;color:#fff;white-space:nowrap;-webkit-text-stroke:.18px currentColor;">A</div>
<div style="left:1473.00px;top:224px;font-size:11.5px;line-height:12px;height:12px;color:#000;white-space:nowrap;letter-spacing:0.186px;transform:scaleX(1.0495);transform-origin:0 0;-webkit-text-stroke:.18px currentColor;">analyst B</div>
<div style="left:253px;top:275px;width:1399px;height:0;border-top:1px dotted #e2dfd4"></div>
<div style="left:327px;top:245px;width:0;height:31px;border-left:1px dotted #e6e3d9"></div>
<div style="left:468px;top:245px;width:0;height:31px;border-left:1px dotted #e6e3d9"></div>
<div style="left:609.8px;top:245px;width:0;height:31px;border-left:1px dotted #e6e3d9"></div>
<div style="left:952.3px;top:245px;width:0;height:31px;border-left:1px dotted #e6e3d9"></div>
<div style="left:1093px;top:245px;width:0;height:31px;border-left:1px dotted #e6e3d9"></div>
<div style="left:1301.5px;top:245px;width:0;height:31px;border-left:1px dotted #e6e3d9"></div>
<div style="left:1442.8px;top:245px;width:0;height:31px;border-left:1px dotted #e6e3d9"></div>
<div style="left:1651.5px;top:245px;width:0;height:31px;border-left:1px dotted #e6e3d9"></div>
<div style="left:287.30px;top:255px;font-size:11.5px;line-height:12px;height:12px;color:#000;white-space:nowrap;-webkit-text-stroke:.18px currentColor;">5</div>
<div style="left:331.50px;top:249px;font-size:11.5px;line-height:12px;height:12px;color:#000;white-space:nowrap;letter-spacing:0.276px;transform:scaleX(1.0843);transform-origin:0 0;-webkit-text-stroke:.18px currentColor;">project one -</div>
<div style="left:331.50px;top:262px;font-size:11.5px;line-height:12px;height:12px;color:#000;white-space:nowrap;letter-spacing:0.259px;transform:scaleX(1.0628);transform-origin:0 0;-webkit-text-stroke:.18px currentColor;">developement</div>
<div style="left:472.60px;top:255px;font-size:11.5px;line-height:12px;height:12px;color:#000;white-space:nowrap;letter-spacing:0.124px;transform:scaleX(1.0242);transform-origin:0 0;-webkit-text-stroke:.18px currentColor;">Task</div>
<div style="left:613.70px;top:255px;font-size:11.5px;line-height:12px;height:12px;color:#000;white-space:nowrap;letter-spacing:0.226px;transform:scaleX(1.0687);transform-origin:0 0;-webkit-text-stroke:.18px currentColor;">Evolution X - Tests</div>
<div style="left:956.40px;top:255px;font-size:11.5px;line-height:12px;height:12px;color:#000;white-space:nowrap;letter-spacing:0.386px;transform:scaleX(1.0996);transform-origin:0 0;-webkit-text-stroke:.18px currentColor;">10/16/2025</div>
<div style="left:1094px;top:246px;width:208px;height:29px;background:#ffa500;"></div>
<div style="left:1173.00px;top:255px;font-size:11.5px;line-height:12px;height:12px;color:#000;white-space:nowrap;letter-spacing:0.238px;transform:scaleX(1.0584);transform-origin:0 0;-webkit-text-stroke:.18px currentColor;">recorded</div>
<div style="left:1362.59px;top:254px;font-size:11.5px;line-height:12px;height:12px;color:#000;white-space:nowrap;-webkit-text-stroke:.18px currentColor;word-spacing:1.5px;letter-spacing:.4px;">0 %</div>
<div style="left:1306px;top:266.2px;width:134px;height:3px;background:#ffa3a3;"></div>
<div style="left:1447.5px;top:250.5px;width:21px;height:21px;background:#1abc9c;border-radius:50%;box-shadow:0 0 0 1px #1abc9c44;"></div>
<div style="left:1451.78px;top:253px;font-size:16px;line-height:17px;height:17px;color:#fff;white-space:nowrap;-webkit-text-stroke:.18px currentColor;">G</div>
<div style="left:1473.00px;top:255px;font-size:11.5px;line-height:12px;height:12px;color:#000;white-space:nowrap;letter-spacing:0.167px;transform:scaleX(1.0442);transform-origin:0 0;-webkit-text-stroke:.18px currentColor;">Gestionnaire</div>
<div style="left:253px;top:306px;width:1399px;height:0;border-top:1px dotted #e2dfd4"></div>
<div style="left:327px;top:276px;width:0;height:31px;border-left:1px dotted #e6e3d9"></div>
<div style="left:468px;top:276px;width:0;height:31px;border-left:1px dotted #e6e3d9"></div>
<div style="left:609.8px;top:276px;width:0;height:31px;border-left:1px dotted #e6e3d9"></div>
<div style="left:952.3px;top:276px;width:0;height:31px;border-left:1px dotted #e6e3d9"></div>
<div style="left:1093px;top:276px;width:0;height:31px;border-left:1px dotted #e6e3d9"></div>
<div style="left:1301.5px;top:276px;width:0;height:31px;border-left:1px dotted #e6e3d9"></div>
<div style="left:1442.8px;top:276px;width:0;height:31px;border-left:1px dotted #e6e3d9"></div>
<div style="left:1651.5px;top:276px;width:0;height:31px;border-left:1px dotted #e6e3d9"></div>
<div style="left:287.30px;top:286px;font-size:11.5px;line-height:12px;height:12px;color:#000;white-space:nowrap;-webkit-text-stroke:.18px currentColor;">6</div>
<div style="left:331.50px;top:280px;font-size:11.5px;line-height:12px;height:12px;color:#000;white-space:nowrap;letter-spacing:0.276px;transform:scaleX(1.0843);transform-origin:0 0;-webkit-text-stroke:.18px currentColor;">project one -</div>
<div style="left:331.50px;top:293px;font-size:11.5px;line-height:12px;height:12px;color:#000;white-space:nowrap;letter-spacing:0.259px;transform:scaleX(1.0628);transform-origin:0 0;-webkit-text-stroke:.18px currentColor;">developement</div>
<div style="left:472.60px;top:286px;font-size:11.5px;line-height:12px;height:12px;color:#000;white-space:nowrap;letter-spacing:0.213px;transform:scaleX(1.0570);transform-origin:0 0;-webkit-text-stroke:.18px currentColor;">Evolution</div>
<div style="left:613.70px;top:286px;font-size:11.5px;line-height:12px;height:12px;color:#000;white-space:nowrap;letter-spacing:0.202px;transform:scaleX(1.0552);transform-origin:0 0;-webkit-text-stroke:.18px currentColor;">Evolution Y</div>
<div style="left:956.40px;top:286px;font-size:11.5px;line-height:12px;height:12px;color:#000;white-space:nowrap;letter-spacing:0.386px;transform:scaleX(1.0996);transform-origin:0 0;-webkit-text-stroke:.18px currentColor;">10/27/2025</div>
<div style="left:1094px;top:277px;width:208px;height:29px;background:#ffa500;"></div>
<div style="left:1173.00px;top:286px;font-size:11.5px;line-height:12px;height:12px;color:#000;white-space:nowrap;letter-spacing:0.238px;transform:scaleX(1.0584);transform-origin:0 0;-webkit-text-stroke:.18px currentColor;">recorded</div>
<div style="left:1362.59px;top:285px;font-size:11.5px;line-height:12px;height:12px;color:#000;white-space:nowrap;-webkit-text-stroke:.18px currentColor;word-spacing:1.5px;letter-spacing:.4px;">0 %</div>
<div style="left:1306px;top:297.2px;width:134px;height:3px;background:#ffa3a3;"></div>
<div style="left:609.4px;top:183.4px;width:1.8px;height:30px;background:#e97b2c;"></div>
<div style="left:951.8px;top:183.4px;width:1.8px;height:30px;background:#e97b2c;"></div>
<div style="left:610px;top:183px;width:343px;height:31px;background:linear-gradient(90deg,#000080 2px,transparent 2px) 5px 0/6px 1px repeat-x,linear-gradient(90deg,#000080 2px,transparent 2px) 5px 100%/6px 1px repeat-x,linear-gradient(180deg,#000080 2px,transparent 2px) 0 0/1px 6px repeat-y,linear-gradient(180deg,#000080 2px,transparent 2px) 100% 0/1px 6px repeat-y"></div>
<div style="left:253px;top:420px;width:1400px;height:4.8px;background:#4d4c7e;"></div>
<div style="left:939px;top:421px;width:3px;height:1.6px;background:#e6e6f0;"></div>
<div style="left:943px;top:421px;width:3px;height:1.6px;background:#e6e6f0;"></div>
<div style="left:947px;top:421px;width:3px;height:1.6px;background:#e6e6f0;"></div>
<div style="left:951px;top:421px;width:3px;height:1.6px;background:#e6e6f0;"></div>
<div style="left:955px;top:421px;width:3px;height:1.6px;background:#e6e6f0;"></div>
<svg style="left:259px;top:430.4px;" width="31" height="26" viewBox="0 0 31 26" fill="none"><g stroke="#3f3e8c" stroke-width="1.3"><rect x="1.2" y="1.3" width="9.2" height="7.6" rx=".6"/><rect x="19.8" y="1.3" width="9" height="7.6" rx=".6"/><rect x="19.8" y="16.4" width="9" height="7.6" rx=".6"/><path d="M10.4 4.9 H19.8 M15 4.9 V20.1 H19.8"/></g></svg>
<div style="left:345.00px;top:436px;font-size:16px;line-height:17px;height:17px;color:#4b4a86;white-space:nowrap;letter-spacing:0.490px;transform:scaleX(1.0977);transform-origin:0 0;font-weight:bold;-webkit-text-stroke:.35px #4b4a86;">Activity</div>
<div style="left:425.70px;top:436px;font-size:16px;line-height:17px;height:17px;color:#4b4a86;white-space:nowrap;letter-spacing:1.942px;transform:scaleX(1.1957);transform-origin:0 0;font-weight:bold;-webkit-text-stroke:.35px #4b4a86;">#4</div>
<div style="left:462.00px;top:436px;font-size:16px;line-height:17px;height:17px;color:#4b4a86;white-space:nowrap;letter-spacing:0.541px;transform:scaleX(1.1103);transform-origin:0 0;font-weight:bold;-webkit-text-stroke:.35px #4b4a86;">- Evolution X - Development</div>
<div style="left:878px;top:428px;width:107px;height:28px;background:#ffa500;"></div>
<div style="left:907.60px;top:436px;font-size:11.5px;line-height:12px;height:12px;color:#000;white-space:nowrap;letter-spacing:0.112px;transform:scaleX(1.0267);transform-origin:0 0;-webkit-text-stroke:.18px currentColor;">recorded</div>
<svg style="left:1003px;top:425px;" width="33" height="34" viewBox="0 0 33 34" fill="none"><rect x="1.2" y="4.4" width="30" height="28" stroke="#666" stroke-width="1" fill="#fff"/><g fill="#fff" stroke="#666" stroke-width=".9"><rect x="4.6" y="2" width="3" height="5.4" rx=".8"/><rect x="14.6" y="2" width="3" height="5.4" rx=".8"/><rect x="24.6" y="2" width="3" height="5.4" rx=".8"/></g><path d="M7.6 4.4 H14.6 M17.6 4.4 H24.6" stroke="#666" stroke-width=".9"/><path d="M18.2 10.6 L19.34 7.27 L27.14 1.07 L29.26 3.73 L21.46 9.93 Z M19.34 7.27 L21.46 9.93" fill="#fff" stroke="#666" stroke-width=".9" stroke-linejoin="round"/></svg>
<div style="left:1007.40px;top:436px;font-size:8.5px;line-height:10px;height:10px;color:#111;white-space:nowrap;letter-spacing:0.256px;transform:scaleX(1.0803);transform-origin:0 0;-webkit-text-stroke:.18px currentColor;">11/25</div>
<div style="left:1009.40px;top:446px;font-size:8.5px;line-height:10px;height:10px;color:#111;white-space:nowrap;letter-spacing:0.026px;transform:scaleX(1.0061);transform-origin:0 0;-webkit-text-stroke:.18px currentColor;">2018</div>
<svg style="left:1038.3px;top:425px;" width="33" height="34" viewBox="0 0 33 34" fill="none"><rect x="1.2" y="4.4" width="30" height="28" stroke="#666" stroke-width="1" fill="#fff"/><g fill="#fff" stroke="#666" stroke-width=".9"><rect x="4.6" y="2" width="3" height="5.4" rx=".8"/><rect x="14.6" y="2" width="3" height="5.4" rx=".8"/><rect x="24.6" y="2" width="3" height="5.4" rx=".8"/></g><path d="M7.6 4.4 H14.6 M17.6 4.4 H24.6" stroke="#666" stroke-width=".9"/></svg>
<div style="left:1042.70px;top:436px;font-size:8.5px;line-height:10px;height:10px;color:#111;white-space:nowrap;letter-spacing:0.201px;transform:scaleX(1.0601);transform-origin:0 0;-webkit-text-stroke:.18px currentColor;">09/02</div>
<div style="left:1044.70px;top:446px;font-size:8.5px;line-height:10px;height:10px;color:#111;white-space:nowrap;letter-spacing:0.107px;transform:scaleX(1.0270);transform-origin:0 0;-webkit-text-stroke:.18px currentColor;">2011</div>
<div style="left:1074.3px;top:427px;width:32px;height:32px;background:#2ecc71;border-radius:50%;box-shadow:0 0 0 1px #2ecc7144;"></div>
<div style="left:1082.90px;top:429px;font-size:24px;line-height:27px;height:27px;color:#fff;white-space:nowrap;-webkit-text-stroke:.18px currentColor;">A</div>
<svg style="left:1479px;top:430px;" width="23" height="26" viewBox="0 0 23 26" fill="none"><path d="M9 3.6 H3.6 C2.8 3.6 2.2 4.2 2.2 5 V22 C2.2 22.8 2.8 23.4 3.6 23.4 H15.8 C16.6 23.4 17.2 22.8 17.2 22 V14" stroke="#d6d5ea" stroke-width="1.1"/><circle cx="13.6" cy="8.6" r="6.4" stroke="#d6d5ea" stroke-width="1.1" fill="#fff"/><path d="M13.6 5.4 V11.8 M10.4 8.6 H16.8" stroke="#d6d5ea" stroke-width="1.1"/></svg>
<svg style="left:1510px;top:431px;" width="24" height="25" viewBox="0 0 24 25" fill="none"><g stroke="#5b5a9a" stroke-width="1.1" stroke-linejoin="round"><rect x="2.4" y="2.4" width="19" height="20.6" rx="1.6"/><path d="M9 2.6 V8.6 H17.6 V2.6 M6.6 22.8 V14.6 H17.4 V22.8 M2.6 21.6 H21.2"/></g></svg>
<svg style="left:1543px;top:430px;" width="25" height="27" viewBox="0 0 25 27" fill="none"><path d="M9.4 5.6 A10 10 0 1 1 3 17.4" stroke="#4a4990" stroke-width="1.1"/><path d="M9.6 1.4 L6.4 6.8 L12.2 8.6" stroke="#4a4990" stroke-width="1.1" stroke-linejoin="round"/></svg>
<svg style="left:1585px;top:432px;" width="9" height="24" viewBox="0 0 9 24" fill="none"><g stroke="#26256f" stroke-width="1.1"><rect x="2" y="2.4" width="4.6" height="4.4"/><rect x="2" y="10" width="4.6" height="4.4"/><rect x="2" y="17.4" width="4.6" height="4.4"/></g></svg>
<div style="left:1611px;top:429px;width:37.6px;height:27.8px;border:1px dashed #d4d4d4;border-radius:5px;box-sizing:border-box"></div>
<svg style="left:1614px;top:430px;" width="28" height="26" viewBox="0 0 28 26" fill="none"><g stroke="#5857a0" stroke-width="1" transform="translate(14 13) rotate(-41.5) scale(1.12) translate(-14.6 -12.4)"><path d="M24.6 10.4 H6.4 C2.6 10.4 2.6 16 6.4 16 H22.4 C27.2 16 27.2 8.2 22.4 8.2 H5.4"/><path d="M23.6 11.8 H7 C4.8 11.8 4.8 14.6 7 14.6 H22.2 C25.4 14.6 25.4 9.6 22.2 9.6 H5.4" stroke-width=".8"/></g></svg>
<div style="left:253px;top:461px;width:1393px;height:1px;background:#e2e2ee;"></div>
<div style="left:1645.4px;top:462px;width:7.8px;height:271px;background:#808080;"></div>
<div style="left:270px;top:477px;width:667px;height:2px;background:#4d4c7e;"></div>
<div style="left:964px;top:477px;width:667px;height:2px;background:#4d4c7e;"></div>
<svg style="left:274px;top:489.5px;" width="9" height="6" viewBox="0 0 9 6" fill="none"><path d="M.8 .8 H8.2 L4.5 5 Z" fill="#111"/></svg>
<div style="left:287.30px;top:484px;font-size:16.6px;line-height:19px;height:19px;color:#565588;white-space:nowrap;letter-spacing:0.233px;transform:scaleX(1.0439);transform-origin:0 0;-webkit-text-stroke:.18px currentColor;">Description</div>
<svg style="left:968px;top:489.5px;" width="9" height="6" viewBox="0 0 9 6" fill="none"><path d="M.8 .8 H8.2 L4.5 5 Z" fill="#111"/></svg>
<div style="left:981.50px;top:484px;font-size:16.6px;line-height:19px;height:19px;color:#565588;white-space:nowrap;letter-spacing:0.303px;transform:scaleX(1.0510);transform-origin:0 0;-webkit-text-stroke:.18px currentColor;">Treatment</div>
<div style="left:275px;top:513px;width:32px;height:32px;background:#ffabab;border-radius:50%;"></div>
<div style="left:288.6px;top:518.4px;width:4.8px;height:13.4px;background:#fff;border-radius:2.4px 2.4px 1.6px 1.6px / 3px 3px 8px 8px"></div><div style="left:288.5px;top:534.4px;width:5px;height:5px;background:#fff;border-radius:50%"></div>
<div style="left:433.50px;top:524px;font-size:13.6px;line-height:15px;height:15px;color:#5c5c5c;white-space:nowrap;letter-spacing:0.162px;transform:scaleX(1.0235);transform-origin:0 0;-webkit-text-stroke:.18px currentColor;">id</div>
<div style="left:460.60px;top:528px;font-size:10px;line-height:11px;height:11px;color:#5c5c5c;white-space:nowrap;-webkit-text-stroke:.18px currentColor;">#</div>
<div style="left:480.00px;top:525px;font-size:13px;line-height:15px;height:15px;color:#555555;white-space:nowrap;-webkit-text-stroke:.18px currentColor;">4</div>
<div style="left:602.60px;top:524px;font-size:13.6px;line-height:15px;height:15px;color:#555555;white-space:nowrap;letter-spacing:0.314px;transform:scaleX(1.0677);transform-origin:0 0;-webkit-text-stroke:.18px currentColor;">001-001-2-TAS-2</div>
<div style="left:408.40px;top:561px;font-size:13.6px;line-height:15px;height:15px;color:#5c5c5c;white-space:nowrap;letter-spacing:0.305px;transform:scaleX(1.0420);transform-origin:0 0;-webkit-text-stroke:.18px currentColor;">name</div>
<div style="left:453px;top:555px;width:476px;height:27px;border:1px solid #cfcfcf;border-left:3px solid #f00;border-radius:5px;box-sizing:border-box;background:#fff"></div>
<div style="left:464.70px;top:561px;font-size:13.6px;line-height:15px;height:15px;color:#555555;white-space:nowrap;letter-spacing:0.278px;transform:scaleX(1.0663);transform-origin:0 0;-webkit-text-stroke:.18px currentColor;">Evolution X - Development</div>
<div style="left:417.40px;top:594px;font-size:13.6px;line-height:15px;height:15px;color:#5c5c5c;white-space:nowrap;letter-spacing:0.218px;transform:scaleX(1.0396);transform-origin:0 0;-webkit-text-stroke:.18px currentColor;">tags</div>
<div style="left:466.20px;top:598px;font-size:13.6px;line-height:15px;height:15px;color:#b4b4b4;white-space:nowrap;letter-spacing:0.329px;transform:scaleX(1.0664);transform-origin:0 0;font-style:italic;-webkit-text-stroke:.18px currentColor;">new tag</div>
<div style="left:466px;top:615px;width:117px;height:1px;background:#d4d4d4;"></div>
<div style="left:363.00px;top:641px;font-size:13.6px;line-height:15px;height:15px;color:#5c5c5c;white-space:nowrap;letter-spacing:0.329px;transform:scaleX(1.0908);transform-origin:0 0;-webkit-text-stroke:.18px currentColor;">activity type</div>
<div style="left:453px;top:635px;width:476px;height:27px;border:1px solid #cfcfcf;border-left:3px solid #f00;border-radius:5px;box-sizing:border-box;background:#fff"></div>
<div style="left:906px;top:638px;width:1px;height:20px;background:#a8a8a8;"></div>
<svg style="left:911.9px;top:643.9px;" width="10" height="7" viewBox="0 0 10 7" fill="none"><path d="M1 1 H8.2 L4.6 5.3 Z" fill="#000"/></svg>
<div style="left:464.70px;top:641px;font-size:13.6px;line-height:15px;height:15px;color:#555555;white-space:nowrap;letter-spacing:0.045px;transform:scaleX(1.0072);transform-origin:0 0;-webkit-text-stroke:.18px currentColor;">Task</div>
<div style="left:368.70px;top:678px;font-size:13.6px;line-height:15px;height:15px;color:#5c5c5c;white-space:nowrap;letter-spacing:0.338px;transform:scaleX(1.0806);transform-origin:0 0;-webkit-text-stroke:.18px currentColor;">project</div>
<div style="left:423px;top:672px;width:27px;height:27px;background:#87ceeb;border-radius:5px;border:1px solid #a9b4bd;box-sizing:border-box;"></div>
<div style="left:453px;top:672px;width:476px;height:27px;border:1px solid #cfcfcf;border-left:3px solid #f00;border-radius:5px;box-sizing:border-box;background:#fff"></div>
<div style="left:906px;top:675px;width:1px;height:20px;background:#a8a8a8;"></div>
<svg style="left:911.9px;top:680.9px;" width="10" height="7" viewBox="0 0 10 7" fill="none"><path d="M1 1 H8.2 L4.6 5.3 Z" fill="#000"/></svg>
<div style="left:464.70px;top:678px;font-size:13.6px;line-height:15px;height:15px;color:#555555;white-space:nowrap;letter-spacing:0.307px;transform:scaleX(1.0746);transform-origin:0 0;-webkit-text-stroke:.18px currentColor;">_project one - developement</div>
<div style="left:322.60px;top:715px;font-size:13.6px;line-height:15px;height:15px;color:#5c5c5c;white-space:nowrap;letter-spacing:0.277px;transform:scaleX(1.0689);transform-origin:0 0;-webkit-text-stroke:.18px currentColor;">external reference</div>
<div style="left:453px;top:709px;width:474px;height:27px;border:1px solid #cfcfcf;border-radius:5px;box-sizing:border-box;background:#fff"></div>
<div style="left:381.50px;top:752px;font-size:13.6px;line-height:15px;height:15px;color:#5c5c5c;white-space:nowrap;letter-spacing:0.276px;transform:scaleX(1.0611);transform-origin:0 0;-webkit-text-stroke:.18px currentColor;">requestor</div>
<div style="left:453px;top:746px;width:474px;height:27px;border:1px solid #cfcfcf;border-radius:5px;box-sizing:border-box;background:#fff"></div>
<div style="left:904px;top:749px;width:1px;height:20px;background:#a8a8a8;"></div>
<svg style="left:909.9px;top:754.9px;" width="10" height="7" viewBox="0 0 10 7" fill="none"><path d="M1 1 H8.2 L4.6 5.3 Z" fill="#000"/></svg>
<div style="left:407.60px;top:789px;font-size:13.6px;line-height:15px;height:15px;color:#5c5c5c;white-space:nowrap;letter-spacing:0.294px;transform:scaleX(1.0711);transform-origin:0 0;-webkit-text-stroke:.18px currentColor;">origin</div>
<svg style="left:453px;top:786px;" width="22" height="22" viewBox="0 0 22 22" fill="none"><rect x="1.4" y="1.6" width="19" height="19" rx="2.4" stroke="#4a4990" stroke-width="1.1" fill="#fff"/><path d="M10.9 6.2 V16 M6 11.1 H15.8" stroke="#1f1e72" stroke-width="1.7"/></svg>
<div style="left:270px;top:820px;width:111px;height:28.5px;border:1px solid #d6d6d6;border-bottom:none;border-radius:6px 6px 0 0;box-sizing:border-box;background:#fff"></div>
<div style="left:287.10px;top:827px;font-size:13.6px;line-height:15px;height:15px;color:#5c5c5c;white-space:nowrap;letter-spacing:0.243px;transform:scaleX(1.0587);transform-origin:0 0;-webkit-text-stroke:.18px currentColor;">description</div>
<div style="left:270px;top:847px;width:667px;height:1px;background:#cfcfcf;"></div>
<div style="left:270px;top:847px;width:1px;height:110px;background:#cfcfcf;"></div>
<div style="left:936px;top:847px;width:1px;height:110px;background:#cfcfcf;"></div>
<div style="left:271px;top:848px;width:109px;height:2px;background:#fff;"></div>
<div style="left:883px;top:819px;width:24px;height:25px;border:1px solid #d4d4d4;border-radius:4.5px;box-sizing:border-box;background:#fff"></div>
<svg style="left:886px;top:822.4px;" width="18" height="18" viewBox="0 0 18 18" fill="none"><g stroke="#a9a8d4" stroke-width="1.15" stroke-linejoin="round"><path d="M4.8 7 V2.4 C4.8 1.8 5.2 1.4 5.8 1.4 H12.2 C12.8 1.4 13.2 1.8 13.2 2.4 V7"/><rect x="1.6" y="7" width="14.8" height="7.4" rx="2"/><rect x="4.8" y="10.8" width="8.4" height="5.4" rx="1" fill="#fff"/><path d="M6.6 3.6 H9.8 M6.6 5.4 H11.4" stroke-width=".8"/></g></svg>
<div style="left:911px;top:819px;width:24px;height:25px;border:1px solid #d4d4d4;border-radius:4.5px;box-sizing:border-box;background:#fff"></div>
<svg style="left:913.3px;top:821.6px;" width="19.4" height="19.4" viewBox="0 0 18 18" fill="none"><g stroke="#9c9bcc" stroke-width="1.05" stroke-linejoin="round"><g transform="translate(1.4 1.6)"><path d="M1 2.6 V1 H2.6 M4.2 1 H5.8 V2.6 M5.8 4.2 V5.8 H4.2 M2.6 5.8 H1 V4.2" /><path d="M2.2 2.2 L4.6 4.6 M4.6 2.8 V4.6 H2.8" stroke-width=".9"/></g><g transform="translate(16.6 1.6) scale(-1 1)"><path d="M1 2.6 V1 H2.6 M4.2 1 H5.8 V2.6 M5.8 4.2 V5.8 H4.2 M2.6 5.8 H1 V4.2" /><path d="M2.2 2.2 L4.6 4.6 M4.6 2.8 V4.6 H2.8" stroke-width=".9"/></g><g transform="translate(1.4 16.4) scale(1 -1)"><path d="M1 2.6 V1 H2.6 M4.2 1 H5.8 V2.6 M5.8 4.2 V5.8 H4.2 M2.6 5.8 H1 V4.2" /><path d="M2.2 2.2 L4.6 4.6 M4.6 2.8 V4.6 H2.8" stroke-width=".9"/></g><g transform="translate(16.6 16.4) scale(-1 -1)"><path d="M1 2.6 V1 H2.6 M4.2 1 H5.8 V2.6 M5.8 4.2 V5.8 H4.2 M2.6 5.8 H1 V4.2" /><path d="M2.2 2.2 L4.6 4.6 M4.6 2.8 V4.6 H2.8" stroke-width=".9"/></g></g></svg>
<div style="left:281.60px;top:855.5px;font-size:13px;line-height:15px;height:15px;color:#222;white-space:nowrap;-webkit-text-stroke:.18px currentColor;">adsf</div>
<div style="left:1043.00px;top:524px;font-size:13.6px;line-height:15px;height:15px;color:#5c5c5c;white-space:nowrap;letter-spacing:0.311px;transform:scaleX(1.0844);transform-origin:0 0;-webkit-text-stroke:.18px currentColor;">parent activity</div>
<div style="left:1149px;top:518px;width:474px;height:27px;border:1px solid #cfcfcf;border-radius:5px;box-sizing:border-box;background:#fff"></div>
<div style="left:1600px;top:521px;width:1px;height:20px;background:#a8a8a8;"></div>
<svg style="left:1605.9px;top:526.9px;" width="10" height="7" viewBox="0 0 10 7" fill="none"><path d="M1 1 H8.2 L4.6 5.3 Z" fill="#000"/></svg>
<div style="left:1158.40px;top:524px;font-size:13.6px;line-height:15px;height:15px;color:#555555;white-space:nowrap;letter-spacing:0.380px;transform:scaleX(1.0985);transform-origin:0 0;-webkit-text-stroke:.18px currentColor;">Evolution X [#2]</div>
<div style="left:1069.00px;top:561px;font-size:13.6px;line-height:15px;height:15px;color:#5c5c5c;white-space:nowrap;letter-spacing:0.280px;transform:scaleX(1.0615);transform-origin:0 0;-webkit-text-stroke:.18px currentColor;">status</div>
<div style="left:1117px;top:555px;width:27px;height:27px;background:#ffa500;border-radius:5px;border:1px solid #c9a86a;box-sizing:border-box;"></div>
<div style="left:1149px;top:555px;width:240px;height:27px;border:1px solid #cfcfcf;border-left:3px solid #f00;border-radius:5px;box-sizing:border-box;background:#fff"></div>
<div style="left:1366px;top:558px;width:1px;height:20px;background:#a8a8a8;"></div>
<svg style="left:1371.9px;top:563.9px;" width="10" height="7" viewBox="0 0 10 7" fill="none"><path d="M1 1 H8.2 L4.6 5.3 Z" fill="#000"/></svg>
<div style="left:1160.00px;top:561px;font-size:13.6px;line-height:15px;height:15px;color:#555555;white-space:nowrap;letter-spacing:0.257px;transform:scaleX(1.0529);transform-origin:0 0;-webkit-text-stroke:.18px currentColor;">recorded</div>
<div style="left:1033.70px;top:598px;font-size:13.6px;line-height:15px;height:15px;color:#5c5c5c;white-space:nowrap;letter-spacing:0.219px;transform:scaleX(1.0496);transform-origin:0 0;-webkit-text-stroke:.18px currentColor;">responsible</div>
<div style="left:1114px;top:589px;width:32px;height:32px;background:#9b59b6;border-radius:50%;box-shadow:0 0 0 1px #9b59b644;"></div>
<div style="left:1122.00px;top:591.5px;font-size:24px;line-height:27px;height:27px;color:#fff;white-space:nowrap;-webkit-text-stroke:.18px currentColor;">P</div>
<div style="left:1149px;top:592px;width:238px;height:27px;border:1px solid #cfcfcf;border-radius:5px;box-sizing:border-box;background:#fff"></div>
<div style="left:1364px;top:595px;width:1px;height:20px;background:#a8a8a8;"></div>
<svg style="left:1369.9px;top:600.9px;" width="10" height="7" viewBox="0 0 10 7" fill="none"><path d="M1 1 H8.2 L4.6 5.3 Z" fill="#000"/></svg>
<div style="left:1158.40px;top:598px;font-size:13.6px;line-height:15px;height:15px;color:#555555;white-space:nowrap;letter-spacing:0.328px;transform:scaleX(1.0753);transform-origin:0 0;-webkit-text-stroke:.18px currentColor;">project manager</div>
<div style="left:1395px;top:555px;width:228.4px;height:27px;border:1px solid #dedee8;border-radius:5px;box-sizing:border-box;background:#efeff6"></div>
<svg style="left:1405px;top:559.4px;" width="18" height="18" viewBox="0 0 18 18" fill="none"><g stroke="#7c7bb6" stroke-width="1" stroke-linejoin="round"><path d="M2.6 4 V2.8 C2.6 2 3 1.4 4 1.4 H15 C16 1.4 16.4 2 16.4 2.8 V15.2 C16.4 16 16 16.6 15 16.6 H4 C3 16.6 2.6 16 2.6 15.2 V14"/><path d="M1.4 6.6 H8.6 V4 L13.4 9 L8.6 14 V11.4 H1.4 Z"/></g></svg>
<div style="left:1426.60px;top:560px;font-size:13.6px;line-height:15px;height:15px;color:#565588;white-space:nowrap;letter-spacing:0.216px;transform:scaleX(1.0538);transform-origin:0 0;-webkit-text-stroke:.18px currentColor;">qualified</div>
<div style="left:1395px;top:592px;width:228.4px;height:27px;border:1px solid #dedee8;border-radius:5px;box-sizing:border-box;background:#efeff6"></div>
<svg style="left:1405px;top:596.4px;" width="18" height="18" viewBox="0 0 18 18" fill="none"><g stroke="#7c7bb6" stroke-width="1" stroke-linejoin="round"><path d="M2.6 4 V2.8 C2.6 2 3 1.4 4 1.4 H15 C16 1.4 16.4 2 16.4 2.8 V15.2 C16.4 16 16 16.6 15 16.6 H4 C3 16.6 2.6 16 2.6 15.2 V14"/><path d="M1.4 6.6 H8.6 V4 L13.4 9 L8.6 14 V11.4 H1.4 Z"/></g></svg>
<div style="left:1426.60px;top:597px;font-size:13.6px;line-height:15px;height:15px;color:#565588;white-space:nowrap;letter-spacing:0.267px;transform:scaleX(1.0607);transform-origin:0 0;-webkit-text-stroke:.18px currentColor;">assign to me</div>
<div style="left:1029.40px;top:635px;font-size:13.6px;line-height:15px;height:15px;color:#5c5c5c;white-space:nowrap;letter-spacing:0.320px;transform:scaleX(1.0803);transform-origin:0 0;-webkit-text-stroke:.18px currentColor;">target milestone</div>
<div style="left:1149px;top:629px;width:474px;height:27px;border:1px solid #cfcfcf;border-radius:5px;box-sizing:border-box;background:#fff"></div>
<div style="left:1600px;top:632px;width:1px;height:20px;background:#a8a8a8;"></div>
<svg style="left:1605.9px;top:637.9px;" width="10" height="7" viewBox="0 0 10 7" fill="none"><path d="M1 1 H8.2 L4.6 5.3 Z" fill="#000"/></svg>
<div style="left:1091.90px;top:672px;font-size:13.6px;line-height:15px;height:15px;color:#5c5c5c;white-space:nowrap;letter-spacing:0.177px;transform:scaleX(1.0307);transform-origin:0 0;-webkit-text-stroke:.18px currentColor;">paused</div>
<div style="left:1149px;top:671px;width:18px;height:18px;border:1px solid #d4d4d4;border-radius:5px;box-sizing:border-box;background:#fff"></div>
<div style="left:1169.50px;top:671px;font-size:13.6px;line-height:15px;height:15px;color:#5c5c5c;white-space:nowrap;letter-spacing:0.285px;transform:scaleX(1.0712);transform-origin:0 0;-webkit-text-stroke:.18px currentColor;">exclude from planning and purge current planned</div>
<div style="left:1064.60px;top:709px;font-size:13.6px;line-height:15px;height:15px;color:#5c5c5c;white-space:nowrap;letter-spacing:0.261px;transform:scaleX(1.0618);transform-origin:0 0;-webkit-text-stroke:.18px currentColor;">in progress</div>
<div style="left:1149px;top:708px;width:18px;height:18px;border:1px solid #d4d4d4;border-radius:5px;box-sizing:border-box;background:#ededed"></div>
<div style="left:1169px;top:703px;width:97px;height:27px;border:1px solid #cfcfcf;border-radius:5px;box-sizing:border-box;background:#fff"></div>
<div style="left:1106.90px;top:746px;font-size:13.6px;line-height:15px;height:15px;color:#5c5c5c;white-space:nowrap;letter-spacing:0.213px;transform:scaleX(1.0327);transform-origin:0 0;-webkit-text-stroke:.18px currentColor;">done</div>
<div style="left:1149px;top:745px;width:18px;height:18px;border:1px solid #d4d4d4;border-radius:5px;box-sizing:border-box;background:#ededed"></div>
<div style="left:1169px;top:740px;width:97px;height:27px;border:1px solid #cfcfcf;border-radius:5px;box-sizing:border-box;background:#fff"></div>
<div style="left:1097.60px;top:783px;font-size:13.6px;line-height:15px;height:15px;color:#5c5c5c;white-space:nowrap;letter-spacing:0.147px;transform:scaleX(1.0288);transform-origin:0 0;-webkit-text-stroke:.18px currentColor;">closed</div>
<div style="left:1149px;top:782px;width:18px;height:18px;border:1px solid #d4d4d4;border-radius:5px;box-sizing:border-box;background:#ededed"></div>
<div style="left:1169px;top:777px;width:97px;height:27px;border:1px solid #cfcfcf;border-radius:5px;box-sizing:border-box;background:#fff"></div>
<div style="left:1282px;top:782px;width:18px;height:18px;border:1px solid #d4d4d4;border-radius:5px;box-sizing:border-box;background:#ededed"></div>
<div style="left:1302.50px;top:782px;font-size:13.6px;line-height:15px;height:15px;color:#5c5c5c;white-space:nowrap;letter-spacing:0.171px;transform:scaleX(1.0370);transform-origin:0 0;-webkit-text-stroke:.18px currentColor;">cancelled</div>
<div style="left:964px;top:814px;width:75px;height:28.3px;border:1px solid #d6d6d6;border-bottom:none;border-radius:6px 6px 0 0;box-sizing:border-box;background:#fff"></div>
<div style="left:980.00px;top:821px;font-size:13.6px;line-height:15px;height:15px;color:#5c5c5c;white-space:nowrap;letter-spacing:0.363px;transform:scaleX(1.0892);transform-origin:0 0;-webkit-text-stroke:.18px currentColor;">result</div>
<div style="left:964px;top:841.3px;width:667px;height:1px;background:#cfcfcf;"></div>
<div style="left:964px;top:841.3px;width:1px;height:116px;background:#cfcfcf;"></div>
<div style="left:1630px;top:841.3px;width:1px;height:116px;background:#cfcfcf;"></div>
<div style="left:965px;top:842px;width:73px;height:2px;background:#fff;"></div>
<div style="left:1577px;top:813px;width:24px;height:25px;border:1px solid #d4d4d4;border-radius:4.5px;box-sizing:border-box;background:#fff"></div>
<svg style="left:1580px;top:816.4px;" width="18" height="18" viewBox="0 0 18 18" fill="none"><g stroke="#a9a8d4" stroke-width="1.15" stroke-linejoin="round"><path d="M4.8 7 V2.4 C4.8 1.8 5.2 1.4 5.8 1.4 H12.2 C12.8 1.4 13.2 1.8 13.2 2.4 V7"/><rect x="1.6" y="7" width="14.8" height="7.4" rx="2"/><rect x="4.8" y="10.8" width="8.4" height="5.4" rx="1" fill="#fff"/><path d="M6.6 3.6 H9.8 M6.6 5.4 H11.4" stroke-width=".8"/></g></svg>
<div style="left:1605px;top:813px;width:24px;height:25px;border:1px solid #d4d4d4;border-radius:4.5px;box-sizing:border-box;background:#fff"></div>
<svg style="left:1607.3px;top:815.6px;" width="19.4" height="19.4" viewBox="0 0 18 18" fill="none"><g stroke="#9c9bcc" stroke-width="1.05" stroke-linejoin="round"><g transform="translate(1.4 1.6)"><path d="M1 2.6 V1 H2.6 M4.2 1 H5.8 V2.6 M5.8 4.2 V5.8 H4.2 M2.6 5.8 H1 V4.2" /><path d="M2.2 2.2 L4.6 4.6 M4.6 2.8 V4.6 H2.8" stroke-width=".9"/></g><g transform="translate(16.6 1.6) scale(-1 1)"><path d="M1 2.6 V1 H2.6 M4.2 1 H5.8 V2.6 M5.8 4.2 V5.8 H4.2 M2.6 5.8 H1 V4.2" /><path d="M2.2 2.2 L4.6 4.6 M4.6 2.8 V4.6 H2.8" stroke-width=".9"/></g><g transform="translate(1.4 16.4) scale(1 -1)"><path d="M1 2.6 V1 H2.6 M4.2 1 H5.8 V2.6 M5.8 4.2 V5.8 H4.2 M2.6 5.8 H1 V4.2" /><path d="M2.2 2.2 L4.6 4.6 M4.6 2.8 V4.6 H2.8" stroke-width=".9"/></g><g transform="translate(16.6 16.4) scale(-1 -1)"><path d="M1 2.6 V1 H2.6 M4.2 1 H5.8 V2.6 M5.8 4.2 V5.8 H4.2 M2.6 5.8 H1 V4.2" /><path d="M2.2 2.2 L4.6 4.6 M4.6 2.8 V4.6 H2.8" stroke-width=".9"/></g></g></svg>
<div style="left:1525.4px;top:118px;width:42.4px;height:197px;border:1px solid #dcdcea;box-sizing:border-box;background:#fff"></div>
<svg style="left:1535px;top:124px;" width="26" height="23" viewBox="0 0 26 23" fill="none"><g stroke="#5251a0" stroke-width="1.05" stroke-linejoin="round"><path d="M6.6 9 V1.4 H19.4 V9"/><path d="M9.4 4 H14.6 M9.4 6.4 H16.8" stroke-width=".9"/><path d="M6.8 17 H3.6 C2.4 17 1.6 16.2 1.6 15 V11 C1.6 9.8 2.4 9 3.6 9 H22.4 C23.6 9 24.4 9.8 24.4 11 V15 C24.4 16.2 23.6 17 22.4 17 H19.2"/><rect x="6.8" y="14" width="12.4" height="7.4" rx="1"/><circle cx="4.4" cy="11.6" r=".8"/></g></svg>
<svg style="left:1537.2px;top:154.6px;" width="26" height="25" viewBox="0 0 26 25" fill="none"><g stroke="#5251a0" stroke-width="1.05" stroke-linejoin="round"><path d="M17.4 11.6 V2.6 C17.4 1.8 16.8 1.2 16 1.2 H2.6 C1.8 1.2 1.2 1.8 1.2 2.6 V21.8 C1.2 22.6 1.8 23.2 2.6 23.2 H16 C16.8 23.2 17.4 22.6 17.4 21.8"/></g></svg>
<div style="left:1541.3px;top:167.4px;width:19.1px;height:8.6px;background:#fff;"></div>
<div style="left:1541.90px;top:166.6px;font-size:8.8px;line-height:10px;height:10px;color:#34338c;white-space:nowrap;letter-spacing:0.059px;transform:scaleX(1.0102);transform-origin:0 0;font-weight:bold;-webkit-text-stroke:.35px #34338c;">PDF</div>
<svg style="left:1535.4px;top:186.6px;" width="26" height="25" viewBox="0 0 26 25" fill="none"><g stroke="#5251a0" stroke-width="1.05" stroke-linejoin="round"><path d="M17.4 11.6 V2.6 C17.4 1.8 16.8 1.2 16 1.2 H2.6 C1.8 1.2 1.2 1.8 1.2 2.6 V21.8 C1.2 22.6 1.8 23.2 2.6 23.2 H16 C16.8 23.2 17.4 22.6 17.4 21.8"/></g></svg>
<div style="left:1539.7px;top:199.2px;width:18.5px;height:8.6px;background:#fff;"></div>
<div style="left:1540.30px;top:198.4px;font-size:8.8px;line-height:10px;height:10px;color:#34338c;white-space:nowrap;letter-spacing:-0.398px;font-weight:bold;-webkit-text-stroke:.35px #34338c;">CSV</div>
<svg style="left:1537px;top:218px;" width="24" height="24" viewBox="0 0 24 24" fill="none"><g stroke="#5251a0" stroke-width="1.05" stroke-linejoin="round"><rect x="1.6" y="13.4" width="4.4" height="9" rx="1"/><rect x="7.2" y="9.6" width="4.4" height="12.8" rx="1"/><rect x="12.8" y="11.6" width="4.4" height="10.8" rx="1"/><rect x="18.4" y="7.6" width="4.4" height="14.8" rx="1"/><path d="M3.2 9.2 L8.6 4.8 L13.4 6.8 L20.6 1.8" stroke-width=".9"/></g><g fill="#5251a0"><circle cx="3.2" cy="9.2" r=".9"/><circle cx="8.6" cy="4.8" r=".9"/><circle cx="13.4" cy="6.8" r=".9"/><circle cx="20.6" cy="1.8" r=".9"/></g></svg>
<svg style="left:1536px;top:249px;" width="25" height="24" viewBox="0 0 25 24" fill="none"><g stroke="#dcdbec" stroke-width="1.05" stroke-linejoin="round"><path d="M12 14 H1.6 V1.6 H11.4 L14.4 4.6 V8.6"/><path d="M4.6 1.8 V5.4 H10 V1.8 M4.4 13.8 V9.6 H10.6"/><path d="M11.6 9.6 H21 L23.6 12.2 V22.4 H11.6 Z M14.4 9.8 V13 H19.6 V9.8 M14.4 22.2 V17.4 H21 V22.2"/></g></svg>
<svg style="left:1536px;top:283px;" width="25" height="23" viewBox="0 0 25 23" fill="none"><g stroke="#5251a0" stroke-width="1.05" stroke-linejoin="round"><rect x="1.6" y="1.6" width="21.8" height="15" rx="1.6"/><path d="M4.4 9.4 H20.6" stroke-width=".9"/><path d="M10.6 16.8 V19.4 M14.4 16.8 V19.4 M7.6 20.6 C10 19.4 15 19.4 17.4 20.6 Z"/></g></svg>
<div style="left:1536.60px;top:379px;font-size:24px;line-height:27px;height:27px;color:#000;white-space:nowrap;-webkit-text-stroke:.18px currentColor;">2</div>
<div style="left:1536px;top:414px;width:39px;height:58px;border:5px solid #000;box-sizing:border-box"></div>
<div style="left:263px;top:842.3px;width:122px;height:46.5px;border:5px solid #000;box-sizing:border-box"></div>
<div style="left:396.40px;top:853px;font-size:24px;line-height:27px;height:27px;color:#000;white-space:nowrap;-webkit-text-stroke:.18px currentColor;">1</div>
</div></body></html>
